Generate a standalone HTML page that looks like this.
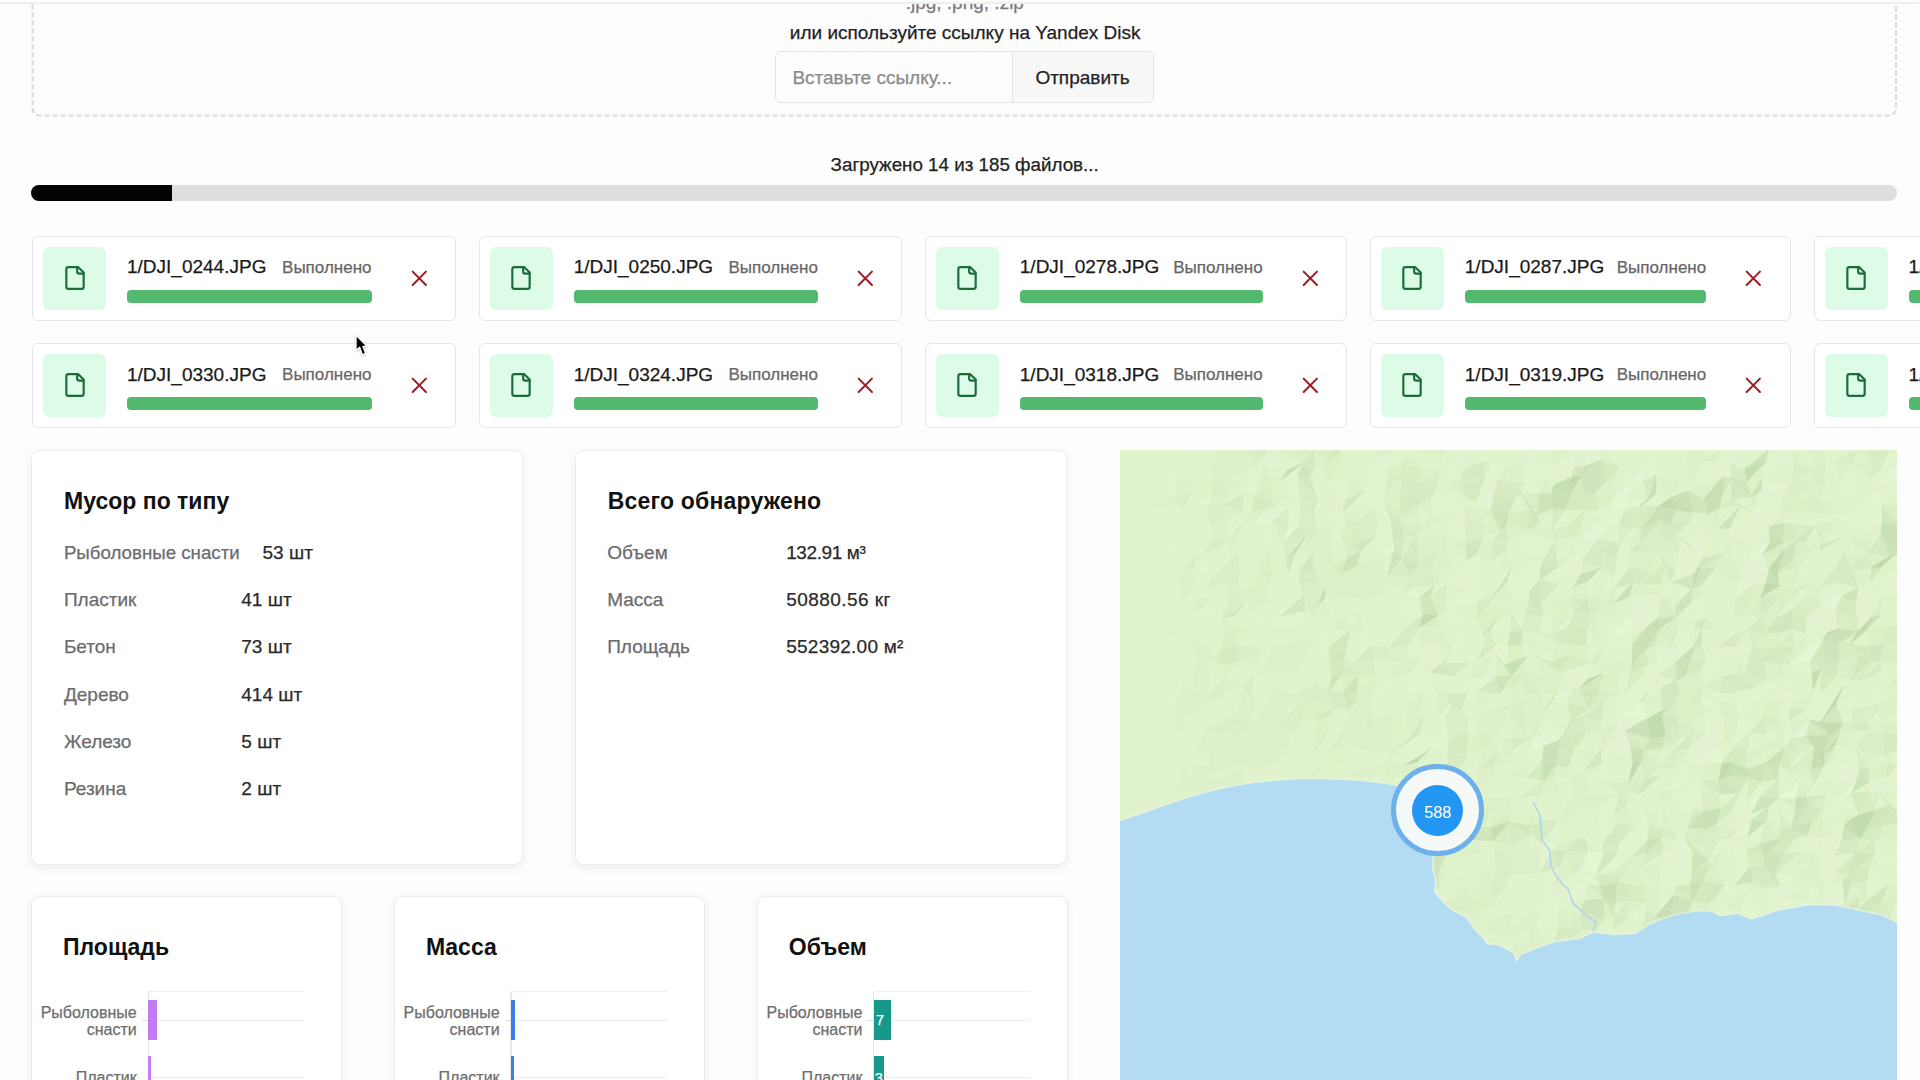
<!DOCTYPE html>
<html><head><meta charset="utf-8"><title>Upload</title>
<style>
html,body{margin:0;padding:0;width:1920px;height:1080px;overflow:hidden;background:#fdfdfd;font-family:"Liberation Sans", sans-serif}
.t{position:absolute;white-space:nowrap;line-height:normal;-webkit-text-stroke:0.25px currentColor}
</style></head><body>
<div style="position:absolute;left:0;top:0;width:1920px;height:2.5px;background:#fdfdfd;z-index:5"></div><div style="position:absolute;left:0;top:2.2px;width:1919px;height:2px;background:#eeeeef;z-index:5"></div>
<svg style="position:absolute;left:0;top:0" width="1920" height="130">
<path d="M32.6 4 V107.5 Q32.6 115.5 40.6 115.5 H1888 Q1896 115.5 1896 107.5 V4" fill="none" stroke="#dcdce1" stroke-width="2.2" stroke-dasharray="5.5 2.5"/>
</svg>
<div class="t" style="left:464.8px;width:1000px;text-align:center;top:-8.2px;font-size:19px;color:#7a7a7a;font-weight:400;letter-spacing:0px">.jpg, .png, .zip</div>
<div class="t" style="left:789.8px;top:21.7px;font-size:19px;color:#222;font-weight:400;letter-spacing:0px;">или используйте ссылку на Yandex Disk</div>
<div style="position:absolute;left:775px;top:51.3px;width:376.5px;height:50px;border:1.2px solid #e4e4e6;border-radius:6px;background:#fdfdfd;overflow:hidden"><div style="position:absolute;left:235.8px;top:0;width:143px;height:50px;background:#f8f8f9;border-left:1.2px solid #e4e4e6"></div></div>
<div class="t" style="left:792.4px;top:67.4px;font-size:19px;color:#8a8a8a;font-weight:400;letter-spacing:0px;">Вставьте ссылку...</div>
<div class="t" style="left:1035.4px;top:67.4px;font-size:19px;color:#222;font-weight:400;letter-spacing:0px;">Отправить</div>
<div class="t" style="left:830.6px;top:154.0px;font-size:18.8px;color:#222;font-weight:400;letter-spacing:0px;">Загружено 14 из 185 файлов...</div>
<div style="position:absolute;left:31px;top:185px;width:1866px;height:16px;border-radius:8px;background:#dedede;overflow:hidden"><div style="width:141px;height:16px;background:#030303"></div></div>
<div style="position:absolute;left:31.9px;top:235.6px;width:424.2px;height:85px;box-sizing:border-box;border:1.3px solid #e6e6e8;border-radius:6px;background:#fff"></div>
<div style="position:absolute;left:43.0px;top:246.7px;width:63px;height:63px;border-radius:6px;background:#dcfce7"></div>
<svg style="position:absolute;left:61.5px;top:265.0px" width="26" height="26" viewBox="0 0 24 24" fill="none" stroke="#1d6b3a" stroke-width="2" stroke-linecap="round" stroke-linejoin="round"><path d="M15 2H6a2 2 0 0 0-2 2v16a2 2 0 0 0 2 2h12a2 2 0 0 0 2-2V7Z"/><path d="M14 2v4a2 2 0 0 0 2 2h4"/></svg>
<div class="t" style="left:127.0px;top:256.4px;font-size:19px;color:#1a1a1a;font-weight:400;letter-spacing:0px;">1/DJI_0244.JPG</div>
<div class="t" style="left:71.5px;width:300px;text-align:right;top:257.5px;font-size:17px;color:#666;font-weight:400;letter-spacing:0px">Выполнено</div>
<div style="position:absolute;left:127.0px;top:289.9px;width:244.5px;height:13px;border-radius:4px;background:#52b96f"></div>
<svg style="position:absolute;left:405.6px;top:264.5px" width="26.6" height="26.6" viewBox="0 0 24 24" fill="none" stroke="#9b1c22" stroke-width="1.8" stroke-linecap="round"><path d="M18 6 6 18"/><path d="m6 6 12 12"/></svg>
<div style="position:absolute;left:478.6px;top:235.6px;width:423.9px;height:85px;box-sizing:border-box;border:1.3px solid #e6e6e8;border-radius:6px;background:#fff"></div>
<div style="position:absolute;left:489.7px;top:246.7px;width:63px;height:63px;border-radius:6px;background:#dcfce7"></div>
<svg style="position:absolute;left:508.2px;top:265.0px" width="26" height="26" viewBox="0 0 24 24" fill="none" stroke="#1d6b3a" stroke-width="2" stroke-linecap="round" stroke-linejoin="round"><path d="M15 2H6a2 2 0 0 0-2 2v16a2 2 0 0 0 2 2h12a2 2 0 0 0 2-2V7Z"/><path d="M14 2v4a2 2 0 0 0 2 2h4"/></svg>
<div class="t" style="left:573.7px;top:256.4px;font-size:19px;color:#1a1a1a;font-weight:400;letter-spacing:0px;">1/DJI_0250.JPG</div>
<div class="t" style="left:517.9px;width:300px;text-align:right;top:257.5px;font-size:17px;color:#666;font-weight:400;letter-spacing:0px">Выполнено</div>
<div style="position:absolute;left:573.7px;top:289.9px;width:244.2px;height:13px;border-radius:4px;background:#52b96f"></div>
<svg style="position:absolute;left:852.0px;top:264.5px" width="26.6" height="26.6" viewBox="0 0 24 24" fill="none" stroke="#9b1c22" stroke-width="1.8" stroke-linecap="round"><path d="M18 6 6 18"/><path d="m6 6 12 12"/></svg>
<div style="position:absolute;left:924.7px;top:235.6px;width:422.5px;height:85px;box-sizing:border-box;border:1.3px solid #e6e6e8;border-radius:6px;background:#fff"></div>
<div style="position:absolute;left:935.8px;top:246.7px;width:63px;height:63px;border-radius:6px;background:#dcfce7"></div>
<svg style="position:absolute;left:954.3px;top:265.0px" width="26" height="26" viewBox="0 0 24 24" fill="none" stroke="#1d6b3a" stroke-width="2" stroke-linecap="round" stroke-linejoin="round"><path d="M15 2H6a2 2 0 0 0-2 2v16a2 2 0 0 0 2 2h12a2 2 0 0 0 2-2V7Z"/><path d="M14 2v4a2 2 0 0 0 2 2h4"/></svg>
<div class="t" style="left:1019.8px;top:256.4px;font-size:19px;color:#1a1a1a;font-weight:400;letter-spacing:0px;">1/DJI_0278.JPG</div>
<div class="t" style="left:962.6px;width:300px;text-align:right;top:257.5px;font-size:17px;color:#666;font-weight:400;letter-spacing:0px">Выполнено</div>
<div style="position:absolute;left:1019.8px;top:289.9px;width:242.8px;height:13px;border-radius:4px;background:#52b96f"></div>
<svg style="position:absolute;left:1296.7px;top:264.5px" width="26.6" height="26.6" viewBox="0 0 24 24" fill="none" stroke="#9b1c22" stroke-width="1.8" stroke-linecap="round"><path d="M18 6 6 18"/><path d="m6 6 12 12"/></svg>
<div style="position:absolute;left:1369.7px;top:235.6px;width:421.1px;height:85px;box-sizing:border-box;border:1.3px solid #e6e6e8;border-radius:6px;background:#fff"></div>
<div style="position:absolute;left:1380.8px;top:246.7px;width:63px;height:63px;border-radius:6px;background:#dcfce7"></div>
<svg style="position:absolute;left:1399.3px;top:265.0px" width="26" height="26" viewBox="0 0 24 24" fill="none" stroke="#1d6b3a" stroke-width="2" stroke-linecap="round" stroke-linejoin="round"><path d="M15 2H6a2 2 0 0 0-2 2v16a2 2 0 0 0 2 2h12a2 2 0 0 0 2-2V7Z"/><path d="M14 2v4a2 2 0 0 0 2 2h4"/></svg>
<div class="t" style="left:1464.8px;top:256.4px;font-size:19px;color:#1a1a1a;font-weight:400;letter-spacing:0px;">1/DJI_0287.JPG</div>
<div class="t" style="left:1406.2px;width:300px;text-align:right;top:257.5px;font-size:17px;color:#666;font-weight:400;letter-spacing:0px">Выполнено</div>
<div style="position:absolute;left:1464.8px;top:289.9px;width:241.4px;height:13px;border-radius:4px;background:#52b96f"></div>
<svg style="position:absolute;left:1740.3px;top:264.5px" width="26.6" height="26.6" viewBox="0 0 24 24" fill="none" stroke="#9b1c22" stroke-width="1.8" stroke-linecap="round"><path d="M18 6 6 18"/><path d="m6 6 12 12"/></svg>
<div style="position:absolute;left:1813.5px;top:235.6px;width:421.0px;height:85px;box-sizing:border-box;border:1.3px solid #e6e6e8;border-radius:6px;background:#fff"></div>
<div style="position:absolute;left:1824.6px;top:246.7px;width:63px;height:63px;border-radius:6px;background:#dcfce7"></div>
<svg style="position:absolute;left:1843.1px;top:265.0px" width="26" height="26" viewBox="0 0 24 24" fill="none" stroke="#1d6b3a" stroke-width="2" stroke-linecap="round" stroke-linejoin="round"><path d="M15 2H6a2 2 0 0 0-2 2v16a2 2 0 0 0 2 2h12a2 2 0 0 0 2-2V7Z"/><path d="M14 2v4a2 2 0 0 0 2 2h4"/></svg>
<div class="t" style="left:1908.6px;top:256.4px;font-size:19px;color:#1a1a1a;font-weight:400;letter-spacing:0px;">1/DJI_0301.JPG</div>
<div class="t" style="left:1849.9px;width:300px;text-align:right;top:257.5px;font-size:17px;color:#666;font-weight:400;letter-spacing:0px">Выполнено</div>
<div style="position:absolute;left:1908.6px;top:289.9px;width:241.3px;height:13px;border-radius:4px;background:#52b96f"></div>
<svg style="position:absolute;left:2184.0px;top:264.5px" width="26.6" height="26.6" viewBox="0 0 24 24" fill="none" stroke="#9b1c22" stroke-width="1.8" stroke-linecap="round"><path d="M18 6 6 18"/><path d="m6 6 12 12"/></svg>
<div style="position:absolute;left:31.9px;top:342.8px;width:424.2px;height:85px;box-sizing:border-box;border:1.3px solid #e6e6e8;border-radius:6px;background:#fff"></div>
<div style="position:absolute;left:43.0px;top:353.9px;width:63px;height:63px;border-radius:6px;background:#dcfce7"></div>
<svg style="position:absolute;left:61.5px;top:372.2px" width="26" height="26" viewBox="0 0 24 24" fill="none" stroke="#1d6b3a" stroke-width="2" stroke-linecap="round" stroke-linejoin="round"><path d="M15 2H6a2 2 0 0 0-2 2v16a2 2 0 0 0 2 2h12a2 2 0 0 0 2-2V7Z"/><path d="M14 2v4a2 2 0 0 0 2 2h4"/></svg>
<div class="t" style="left:127.0px;top:363.6px;font-size:19px;color:#1a1a1a;font-weight:400;letter-spacing:0px;">1/DJI_0330.JPG</div>
<div class="t" style="left:71.5px;width:300px;text-align:right;top:364.7px;font-size:17px;color:#666;font-weight:400;letter-spacing:0px">Выполнено</div>
<div style="position:absolute;left:127.0px;top:397.1px;width:244.5px;height:13px;border-radius:4px;background:#52b96f"></div>
<svg style="position:absolute;left:405.6px;top:371.7px" width="26.6" height="26.6" viewBox="0 0 24 24" fill="none" stroke="#9b1c22" stroke-width="1.8" stroke-linecap="round"><path d="M18 6 6 18"/><path d="m6 6 12 12"/></svg>
<div style="position:absolute;left:478.6px;top:342.8px;width:423.9px;height:85px;box-sizing:border-box;border:1.3px solid #e6e6e8;border-radius:6px;background:#fff"></div>
<div style="position:absolute;left:489.7px;top:353.9px;width:63px;height:63px;border-radius:6px;background:#dcfce7"></div>
<svg style="position:absolute;left:508.2px;top:372.2px" width="26" height="26" viewBox="0 0 24 24" fill="none" stroke="#1d6b3a" stroke-width="2" stroke-linecap="round" stroke-linejoin="round"><path d="M15 2H6a2 2 0 0 0-2 2v16a2 2 0 0 0 2 2h12a2 2 0 0 0 2-2V7Z"/><path d="M14 2v4a2 2 0 0 0 2 2h4"/></svg>
<div class="t" style="left:573.7px;top:363.6px;font-size:19px;color:#1a1a1a;font-weight:400;letter-spacing:0px;">1/DJI_0324.JPG</div>
<div class="t" style="left:517.9px;width:300px;text-align:right;top:364.7px;font-size:17px;color:#666;font-weight:400;letter-spacing:0px">Выполнено</div>
<div style="position:absolute;left:573.7px;top:397.1px;width:244.2px;height:13px;border-radius:4px;background:#52b96f"></div>
<svg style="position:absolute;left:852.0px;top:371.7px" width="26.6" height="26.6" viewBox="0 0 24 24" fill="none" stroke="#9b1c22" stroke-width="1.8" stroke-linecap="round"><path d="M18 6 6 18"/><path d="m6 6 12 12"/></svg>
<div style="position:absolute;left:924.7px;top:342.8px;width:422.5px;height:85px;box-sizing:border-box;border:1.3px solid #e6e6e8;border-radius:6px;background:#fff"></div>
<div style="position:absolute;left:935.8px;top:353.9px;width:63px;height:63px;border-radius:6px;background:#dcfce7"></div>
<svg style="position:absolute;left:954.3px;top:372.2px" width="26" height="26" viewBox="0 0 24 24" fill="none" stroke="#1d6b3a" stroke-width="2" stroke-linecap="round" stroke-linejoin="round"><path d="M15 2H6a2 2 0 0 0-2 2v16a2 2 0 0 0 2 2h12a2 2 0 0 0 2-2V7Z"/><path d="M14 2v4a2 2 0 0 0 2 2h4"/></svg>
<div class="t" style="left:1019.8px;top:363.6px;font-size:19px;color:#1a1a1a;font-weight:400;letter-spacing:0px;">1/DJI_0318.JPG</div>
<div class="t" style="left:962.6px;width:300px;text-align:right;top:364.7px;font-size:17px;color:#666;font-weight:400;letter-spacing:0px">Выполнено</div>
<div style="position:absolute;left:1019.8px;top:397.1px;width:242.8px;height:13px;border-radius:4px;background:#52b96f"></div>
<svg style="position:absolute;left:1296.7px;top:371.7px" width="26.6" height="26.6" viewBox="0 0 24 24" fill="none" stroke="#9b1c22" stroke-width="1.8" stroke-linecap="round"><path d="M18 6 6 18"/><path d="m6 6 12 12"/></svg>
<div style="position:absolute;left:1369.7px;top:342.8px;width:421.1px;height:85px;box-sizing:border-box;border:1.3px solid #e6e6e8;border-radius:6px;background:#fff"></div>
<div style="position:absolute;left:1380.8px;top:353.9px;width:63px;height:63px;border-radius:6px;background:#dcfce7"></div>
<svg style="position:absolute;left:1399.3px;top:372.2px" width="26" height="26" viewBox="0 0 24 24" fill="none" stroke="#1d6b3a" stroke-width="2" stroke-linecap="round" stroke-linejoin="round"><path d="M15 2H6a2 2 0 0 0-2 2v16a2 2 0 0 0 2 2h12a2 2 0 0 0 2-2V7Z"/><path d="M14 2v4a2 2 0 0 0 2 2h4"/></svg>
<div class="t" style="left:1464.8px;top:363.6px;font-size:19px;color:#1a1a1a;font-weight:400;letter-spacing:0px;">1/DJI_0319.JPG</div>
<div class="t" style="left:1406.2px;width:300px;text-align:right;top:364.7px;font-size:17px;color:#666;font-weight:400;letter-spacing:0px">Выполнено</div>
<div style="position:absolute;left:1464.8px;top:397.1px;width:241.4px;height:13px;border-radius:4px;background:#52b96f"></div>
<svg style="position:absolute;left:1740.3px;top:371.7px" width="26.6" height="26.6" viewBox="0 0 24 24" fill="none" stroke="#9b1c22" stroke-width="1.8" stroke-linecap="round"><path d="M18 6 6 18"/><path d="m6 6 12 12"/></svg>
<div style="position:absolute;left:1813.5px;top:342.8px;width:421.0px;height:85px;box-sizing:border-box;border:1.3px solid #e6e6e8;border-radius:6px;background:#fff"></div>
<div style="position:absolute;left:1824.6px;top:353.9px;width:63px;height:63px;border-radius:6px;background:#dcfce7"></div>
<svg style="position:absolute;left:1843.1px;top:372.2px" width="26" height="26" viewBox="0 0 24 24" fill="none" stroke="#1d6b3a" stroke-width="2" stroke-linecap="round" stroke-linejoin="round"><path d="M15 2H6a2 2 0 0 0-2 2v16a2 2 0 0 0 2 2h12a2 2 0 0 0 2-2V7Z"/><path d="M14 2v4a2 2 0 0 0 2 2h4"/></svg>
<div class="t" style="left:1908.6px;top:363.6px;font-size:19px;color:#1a1a1a;font-weight:400;letter-spacing:0px;">1/DJI_0312.JPG</div>
<div class="t" style="left:1849.9px;width:300px;text-align:right;top:364.7px;font-size:17px;color:#666;font-weight:400;letter-spacing:0px">Выполнено</div>
<div style="position:absolute;left:1908.6px;top:397.1px;width:241.3px;height:13px;border-radius:4px;background:#52b96f"></div>
<svg style="position:absolute;left:2184.0px;top:371.7px" width="26.6" height="26.6" viewBox="0 0 24 24" fill="none" stroke="#9b1c22" stroke-width="1.8" stroke-linecap="round"><path d="M18 6 6 18"/><path d="m6 6 12 12"/></svg>
<svg style="position:absolute;left:0;top:0;z-index:10" width="400" height="380"><filter id="cs" x="-50%" y="-50%" width="200%" height="200%"><feDropShadow dx="0" dy="1" stdDeviation="1" flood-opacity="0.25"/></filter><path filter="url(#cs)" d="M356.1,335.4 L356.1,350.2 L359.7,347.1 L362.4,354.6 L365.5,353.4 L362.8,346.4 L367,346.4 Z" fill="#000" stroke="#fff" stroke-width="1.1" stroke-linejoin="round"/></svg>
<div style="position:absolute;left:30.7px;top:449.5px;width:492.6px;height:415.5px;box-sizing:border-box;border:1px solid #ececee;border-radius:8px;background:#fff;box-shadow:0 3px 10px rgba(0,0,0,0.06)"></div>
<div style="position:absolute;left:575px;top:449.5px;width:492.3px;height:415.5px;box-sizing:border-box;border:1px solid #ececee;border-radius:8px;background:#fff;box-shadow:0 3px 10px rgba(0,0,0,0.06)"></div>
<div class="t" style="left:64.1px;top:488.0px;font-size:23px;color:#111;font-weight:700;letter-spacing:0px;-webkit-text-stroke:0;">Мусор по типу</div>
<div class="t" style="left:607.7px;top:488.0px;font-size:23px;color:#111;font-weight:700;letter-spacing:0.2px;-webkit-text-stroke:0;">Всего обнаружено</div>
<div class="t" style="left:63.9px;top:542.1px;font-size:18.7px;color:#6b6b70;font-weight:400;letter-spacing:0px;">Рыболовные снасти</div>
<div class="t" style="left:262.5px;top:541.8px;font-size:19px;color:#2a2a2a;font-weight:400;letter-spacing:0px;">53 шт</div>
<div class="t" style="left:63.9px;top:589.1px;font-size:19px;color:#6b6b70;font-weight:400;letter-spacing:0px;">Пластик</div>
<div class="t" style="left:241.3px;top:589.1px;font-size:19px;color:#2a2a2a;font-weight:400;letter-spacing:0px;">41 шт</div>
<div class="t" style="left:63.9px;top:636.4px;font-size:19px;color:#6b6b70;font-weight:400;letter-spacing:0px;">Бетон</div>
<div class="t" style="left:241.3px;top:636.4px;font-size:19px;color:#2a2a2a;font-weight:400;letter-spacing:0px;">73 шт</div>
<div class="t" style="left:63.9px;top:683.7px;font-size:19px;color:#6b6b70;font-weight:400;letter-spacing:0px;">Дерево</div>
<div class="t" style="left:241.3px;top:683.7px;font-size:19px;color:#2a2a2a;font-weight:400;letter-spacing:0px;">414 шт</div>
<div class="t" style="left:63.9px;top:731.0px;font-size:19px;color:#6b6b70;font-weight:400;letter-spacing:0px;">Железо</div>
<div class="t" style="left:241.3px;top:731.0px;font-size:19px;color:#2a2a2a;font-weight:400;letter-spacing:0px;">5 шт</div>
<div class="t" style="left:63.9px;top:778.3px;font-size:19px;color:#6b6b70;font-weight:400;letter-spacing:0px;">Резина</div>
<div class="t" style="left:241.3px;top:778.3px;font-size:19px;color:#2a2a2a;font-weight:400;letter-spacing:0px;">2 шт</div>
<div class="t" style="left:607.2px;top:541.8px;font-size:19px;color:#6b6b70;font-weight:400;letter-spacing:0px;">Объем</div>
<div class="t" style="left:786.2px;top:541.8px;font-size:19px;color:#2a2a2a;font-weight:400;letter-spacing:-0.4px;">132.91 м³</div>
<div class="t" style="left:607.2px;top:589.1px;font-size:19px;color:#6b6b70;font-weight:400;letter-spacing:0px;">Масса</div>
<div class="t" style="left:786.2px;top:589.1px;font-size:19px;color:#2a2a2a;font-weight:400;letter-spacing:0.45px;">50880.56 кг</div>
<div class="t" style="left:607.2px;top:636.4px;font-size:19px;color:#6b6b70;font-weight:400;letter-spacing:0px;">Площадь</div>
<div class="t" style="left:786.2px;top:636.4px;font-size:19px;color:#2a2a2a;font-weight:400;letter-spacing:0.25px;">552392.00 м²</div>
<div style="position:absolute;left:30.8px;top:895.9px;width:311.1px;height:250px;box-sizing:border-box;border:1px solid #ececee;border-radius:8px;background:#fff;box-shadow:0 3px 10px rgba(0,0,0,0.06)"></div>
<div class="t" style="left:63.0px;top:934.0px;font-size:23px;color:#111;font-weight:700;letter-spacing:0px;-webkit-text-stroke:0;">Площадь</div>
<div style="position:absolute;left:148.0px;top:991.2px;width:156.2px;height:1.2px;background:#eeeeee"></div>
<div style="position:absolute;left:148.0px;top:1019.8px;width:156.2px;height:1.2px;background:#eeeeee"></div>
<div style="position:absolute;left:148.0px;top:1076.7px;width:156.2px;height:1.2px;background:#eeeeee"></div>
<div style="position:absolute;left:147.5px;top:991.7px;width:1.2px;height:90px;background:#e6e6e6"></div>
<div style="position:absolute;left:142.0px;top:1019.8px;width:6px;height:1.2px;background:#e0e0e0"></div>
<div style="position:absolute;left:148.0px;top:999.5px;width:8.9px;height:40.3px;background:#c27cf6"></div>
<div style="position:absolute;left:148.0px;top:1056.3px;width:2.8px;height:30px;background:#c27cf6"></div>
<div class="t" style="left:-163.3px;width:300px;text-align:right;top:1003.5px;font-size:16px;color:#6e6e6e;font-weight:400;letter-spacing:0px">Рыболовные</div>
<div class="t" style="left:-163.3px;width:300px;text-align:right;top:1020.7px;font-size:16px;color:#6e6e6e;font-weight:400;letter-spacing:0px">снасти</div>
<div class="t" style="left:-163.3px;width:300px;text-align:right;top:1068.5px;font-size:16px;color:#6e6e6e;font-weight:400;letter-spacing:0px">Пластик</div>
<div style="position:absolute;left:393.7px;top:895.9px;width:311.1px;height:250px;box-sizing:border-box;border:1px solid #ececee;border-radius:8px;background:#fff;box-shadow:0 3px 10px rgba(0,0,0,0.06)"></div>
<div class="t" style="left:425.9px;top:934.0px;font-size:23px;color:#111;font-weight:700;letter-spacing:0px;-webkit-text-stroke:0;">Масса</div>
<div style="position:absolute;left:510.9px;top:991.2px;width:156.2px;height:1.2px;background:#eeeeee"></div>
<div style="position:absolute;left:510.9px;top:1019.8px;width:156.2px;height:1.2px;background:#eeeeee"></div>
<div style="position:absolute;left:510.9px;top:1076.7px;width:156.2px;height:1.2px;background:#eeeeee"></div>
<div style="position:absolute;left:510.4px;top:991.7px;width:1.2px;height:90px;background:#e6e6e6"></div>
<div style="position:absolute;left:504.9px;top:1019.8px;width:6px;height:1.2px;background:#e0e0e0"></div>
<div style="position:absolute;left:510.9px;top:999.5px;width:4.4px;height:40.3px;background:#3b7ee8"></div>
<div style="position:absolute;left:510.9px;top:1056.3px;width:2.8px;height:30px;background:#3b7ee8"></div>
<div class="t" style="left:199.6px;width:300px;text-align:right;top:1003.5px;font-size:16px;color:#6e6e6e;font-weight:400;letter-spacing:0px">Рыболовные</div>
<div class="t" style="left:199.6px;width:300px;text-align:right;top:1020.7px;font-size:16px;color:#6e6e6e;font-weight:400;letter-spacing:0px">снасти</div>
<div class="t" style="left:199.6px;width:300px;text-align:right;top:1068.5px;font-size:16px;color:#6e6e6e;font-weight:400;letter-spacing:0px">Пластик</div>
<div style="position:absolute;left:756.6px;top:895.9px;width:311.1px;height:250px;box-sizing:border-box;border:1px solid #ececee;border-radius:8px;background:#fff;box-shadow:0 3px 10px rgba(0,0,0,0.06)"></div>
<div class="t" style="left:788.8px;top:934.0px;font-size:23px;color:#111;font-weight:700;letter-spacing:0px;-webkit-text-stroke:0;">Объем</div>
<div style="position:absolute;left:873.8px;top:991.2px;width:156.2px;height:1.2px;background:#eeeeee"></div>
<div style="position:absolute;left:873.8px;top:1019.8px;width:156.2px;height:1.2px;background:#eeeeee"></div>
<div style="position:absolute;left:873.8px;top:1076.7px;width:156.2px;height:1.2px;background:#eeeeee"></div>
<div style="position:absolute;left:873.3px;top:991.7px;width:1.2px;height:90px;background:#e6e6e6"></div>
<div style="position:absolute;left:867.8px;top:1019.8px;width:6px;height:1.2px;background:#e0e0e0"></div>
<div style="position:absolute;left:873.8px;top:999.5px;width:17.6px;height:40.3px;background:#16998a"></div>
<div style="position:absolute;left:873.8px;top:1056.3px;width:10.6px;height:30px;background:#16998a"></div>
<div class="t" style="left:562.5px;width:300px;text-align:right;top:1003.5px;font-size:16px;color:#6e6e6e;font-weight:400;letter-spacing:0px">Рыболовные</div>
<div class="t" style="left:562.5px;width:300px;text-align:right;top:1020.7px;font-size:16px;color:#6e6e6e;font-weight:400;letter-spacing:0px">снасти</div>
<div class="t" style="left:562.5px;width:300px;text-align:right;top:1068.5px;font-size:16px;color:#6e6e6e;font-weight:400;letter-spacing:0px">Пластик</div>
<div class="t" style="left:876.1px;top:1012.3px;font-size:14.4px;color:#fff;font-weight:400;letter-spacing:0px;">7</div>
<div class="t" style="left:874.8px;top:1070.0px;font-size:14.4px;color:#fff;font-weight:400;letter-spacing:0px;">3</div>
<svg style="position:absolute;left:1119.6px;top:450px" width="777.1" height="630" viewBox="0 0 777.1 630">
<rect width="777.1" height="630" fill="#e1f3cc"/>
<g stroke-width="0.7"><path fill="#e1f3cf" stroke="#e1f3cf" d="M75 0 89 0 79 13ZM149 0 160 0 167 20ZM149 0 167 20 145 17ZM325 0 349 0 344 19ZM423 0 415 14 406 13ZM466 0 465 16 455 17ZM479 0 482 10 465 16ZM537 0 536 16 524 14ZM557 0 550 10 536 16ZM601 0 615 0 611 14ZM601 0 611 14 595 11ZM615 0 625 19 611 14ZM628 0 648 0 625 19ZM662 0 672 0 674 11ZM662 0 674 11 657 13ZM770 0 777 15 760 20ZM124 20 135 17 123 35ZM135 17 139 33 123 35ZM251 12 260 29 245 35ZM251 12 267 27 260 29ZM328 14 344 19 341 32ZM328 14 341 32 332 33ZM372 12 387 15 378 30ZM406 13 415 14 425 29ZM406 13 425 29 403 33ZM415 14 434 16 434 35ZM415 14 434 35 425 29ZM434 16 455 17 452 27ZM514 18 515 32 491 33ZM583 10 584 34 570 35ZM583 10 595 11 603 27ZM595 11 612 28 603 27ZM733 13 735 25 720 30ZM760 20 760 33 749 27ZM760 20 777 15 760 33ZM49 32 57 29 46 48ZM57 29 56 46 46 48ZM123 35 136 45 124 44ZM178 25 180 50 164 45ZM207 32 230 29 226 50ZM260 29 251 44 244 41ZM260 29 267 27 266 42ZM260 29 266 42 251 44ZM403 33 425 29 420 43ZM403 33 420 43 401 44ZM720 30 735 25 735 43ZM720 30 735 43 715 49ZM760 33 777 27 777 45ZM244 41 251 44 254 58ZM244 41 254 58 242 61ZM251 44 266 42 265 56ZM251 44 265 56 254 58ZM311 47 332 41 334 62ZM311 47 334 62 311 64ZM332 41 343 57 334 62ZM505 50 528 50 506 59ZM641 40 662 44 664 61ZM641 40 664 61 640 64ZM763 41 777 45 762 55ZM155 56 168 59 152 72ZM168 59 180 64 168 80ZM223 63 226 71 213 76ZM242 61 254 58 236 72ZM254 58 265 56 271 70ZM465 60 477 60 485 71ZM477 60 490 58 485 71ZM705 64 723 63 718 70ZM705 64 718 70 704 74ZM723 63 736 64 731 79ZM723 63 731 79 718 70ZM736 64 752 62 748 80ZM736 64 748 80 731 79ZM152 72 150 88 139 86ZM213 76 226 71 211 89ZM271 70 274 95 255 87ZM345 71 346 94 327 87ZM514 77 514 85 500 94ZM46 94 65 91 43 105ZM139 86 150 88 149 102ZM255 87 274 95 260 103ZM400 88 425 86 424 109ZM400 88 424 109 400 104ZM454 87 463 87 462 110ZM500 94 514 85 509 103ZM500 94 509 103 497 104ZM556 85 575 102 560 101ZM630 92 650 92 629 109ZM87 102 95 125 72 120ZM347 110 356 104 342 119ZM356 104 361 122 342 119ZM455 103 447 117 437 117ZM497 104 509 103 510 117ZM497 104 510 117 494 125ZM642 104 649 119 635 119ZM332 119 342 119 345 139ZM332 119 345 139 326 133ZM378 124 392 116 378 140ZM409 118 421 119 420 130ZM409 118 420 130 410 140ZM437 117 447 117 439 134ZM447 117 461 124 454 136ZM620 121 635 119 619 131ZM680 116 691 121 689 134ZM702 119 716 117 700 136ZM760 118 777 122 777 131ZM760 118 777 131 765 131ZM76 131 75 145 62 153ZM345 139 347 154 326 155ZM387 131 410 140 391 149ZM410 140 409 151 391 149ZM439 134 431 155 421 154ZM540 134 551 132 556 155ZM765 131 777 146 762 146ZM90 149 95 167 77 164ZM244 148 238 163 228 162ZM282 148 300 148 280 169ZM300 148 303 165 280 169ZM326 155 342 160 327 161ZM509 147 528 145 513 163ZM543 147 537 169 529 163ZM571 152 583 145 572 170ZM583 145 585 169 572 170ZM670 148 671 160 656 169ZM746 155 762 146 752 167ZM134 162 145 168 153 177ZM134 162 153 177 131 176ZM145 168 160 166 163 179ZM145 168 163 179 153 177ZM160 166 185 161 163 179ZM185 161 175 177 163 179ZM185 161 192 166 175 177ZM327 161 342 160 340 177ZM327 161 340 177 333 177ZM377 169 392 163 390 183ZM377 169 390 183 370 180ZM423 165 433 166 432 185ZM423 165 432 185 418 183ZM498 170 513 163 491 183ZM529 163 537 169 526 178ZM686 170 707 183 686 184ZM49 185 60 191 42 193ZM244 181 250 179 251 196ZM244 181 251 196 241 195ZM333 177 340 177 348 197ZM333 177 348 197 332 199ZM491 183 492 197 482 200ZM491 183 512 183 513 194ZM574 175 575 195 551 198ZM686 184 707 183 703 190ZM194 190 209 198 209 207ZM194 190 209 207 199 208ZM241 195 251 196 235 212ZM289 194 301 198 284 211ZM332 199 349 213 325 213ZM348 197 356 213 349 213ZM535 195 551 198 555 213ZM535 195 555 213 537 212ZM320 214 310 222 295 223ZM528 214 537 212 538 224ZM528 214 538 224 523 224ZM597 206 603 226 580 221ZM670 214 690 211 692 222ZM670 214 692 222 674 221ZM265 227 271 239 254 242ZM289 225 295 223 305 243ZM289 225 305 243 284 243ZM295 223 310 222 316 238ZM295 223 316 238 305 243ZM347 228 364 226 358 241ZM347 228 358 241 347 243ZM447 220 453 238 436 244ZM498 228 511 222 498 244ZM511 222 505 243 498 244ZM538 224 556 230 541 238ZM580 221 603 226 583 236ZM646 230 660 237 646 242ZM761 220 777 227 765 241ZM254 242 271 239 252 252ZM305 243 316 238 300 260ZM380 243 376 260 357 256ZM498 244 505 243 512 260ZM498 244 512 260 498 257ZM505 243 528 244 512 260ZM635 237 627 251 615 252ZM635 237 646 242 627 251ZM660 237 662 252 647 250ZM693 240 701 243 687 260ZM701 243 723 237 709 259ZM736 244 731 260 716 254ZM754 240 765 241 764 253ZM754 240 764 253 754 256ZM765 241 777 237 764 253ZM300 260 305 265 287 268ZM300 260 318 268 305 265ZM469 259 484 250 463 267ZM498 257 512 260 498 271ZM581 253 597 251 604 270ZM615 252 627 251 627 273ZM615 252 627 273 619 268ZM670 259 670 270 659 271ZM687 260 709 259 689 270ZM764 253 760 274 749 273ZM318 268 326 265 329 290ZM318 268 329 290 319 285ZM357 269 357 283 348 283ZM431 266 440 290 415 285ZM481 272 498 271 480 280ZM627 273 631 282 615 289ZM670 270 673 287 665 283ZM299 284 305 303 281 297ZM299 284 319 285 311 298ZM299 284 311 298 305 303ZM319 285 329 290 328 302ZM319 285 328 302 311 298ZM602 283 612 298 600 299ZM645 284 665 283 646 296ZM408 302 424 296 409 316ZM424 296 422 312 409 316ZM498 304 511 299 491 311ZM715 295 736 300 740 319ZM715 295 740 319 717 310ZM297 312 316 316 318 326ZM297 312 318 326 299 334ZM409 316 422 312 407 327ZM448 317 465 320 451 327ZM491 311 493 333 480 330ZM556 318 565 310 568 332ZM556 318 568 332 552 334ZM704 316 717 310 715 332ZM704 316 715 332 701 328ZM552 334 553 341 539 342ZM552 334 568 332 553 341ZM568 332 581 331 582 342ZM568 332 582 342 572 347ZM767 327 760 343 749 342ZM767 327 777 342 760 343ZM199 348 208 340 197 357ZM302 344 303 363 282 363ZM350 344 365 347 359 363ZM350 344 359 363 344 361ZM553 341 572 347 573 359ZM553 341 573 359 559 364ZM658 348 676 358 658 359ZM706 345 723 348 725 364ZM706 345 725 364 703 360ZM723 348 739 365 725 364ZM760 343 768 355 755 361ZM435 360 446 358 438 370ZM482 356 494 365 497 374ZM482 356 497 374 477 373ZM524 357 529 376 514 376ZM632 363 649 356 632 370ZM703 360 725 364 724 376ZM438 370 439 393 421 393ZM477 373 497 374 483 394ZM514 376 508 393 500 392ZM514 376 529 376 508 393ZM529 376 528 390 508 393ZM646 371 640 394 628 386ZM702 374 724 376 722 391ZM298 385 310 404 302 403ZM421 393 433 401 421 407ZM464 388 483 394 483 404ZM500 392 508 393 511 407ZM500 392 511 407 495 406ZM508 393 528 390 511 407ZM600 389 600 403 588 410ZM600 389 612 387 600 403ZM687 385 693 401 680 402ZM302 403 304 418 281 424ZM557 408 553 424 542 416ZM573 403 572 424 553 424ZM615 410 626 400 617 415ZM715 405 736 402 717 422ZM761 402 777 407 763 420ZM419 423 439 417 421 440ZM542 416 553 424 555 437ZM553 424 572 424 570 435ZM553 424 570 435 555 437ZM655 425 673 424 678 439ZM750 416 768 435 746 433ZM777 424 777 435 768 435ZM421 440 432 436 439 453ZM421 440 439 453 420 450ZM604 435 615 435 611 453ZM642 438 660 436 655 452ZM642 438 655 452 648 451ZM694 430 704 451 685 452ZM704 438 723 431 725 453ZM420 450 439 453 418 462ZM445 451 461 461 454 462ZM495 454 509 450 494 467ZM525 453 527 461 507 469ZM596 447 619 463 601 461ZM626 446 648 470 634 461ZM648 451 655 452 659 460ZM648 451 659 460 648 470ZM677 450 674 466 659 460ZM677 450 685 452 687 465ZM677 450 687 465 674 466ZM704 451 725 453 722 464ZM704 451 722 464 701 465ZM418 462 439 461 439 476ZM418 462 439 476 416 476ZM507 469 527 461 507 479ZM659 460 674 466 660 478ZM722 464 722 475 706 483ZM439 476 432 499 425 498ZM507 479 522 476 509 498ZM612 483 626 478 610 495ZM425 498 432 499 433 506ZM425 498 433 506 423 505ZM423 505 433 506 435 525ZM423 505 435 525 417 529ZM560 512 573 512 558 529ZM573 512 584 515 566 527ZM770 507 777 508 767 521ZM299 528 305 538 290 543ZM332 530 346 527 330 536ZM417 529 435 525 420 539ZM452 529 461 523 447 538ZM691 528 703 522 690 545ZM402 542 406 550 386 559ZM581 541 605 538 581 550ZM605 538 603 551 581 550ZM731 536 751 540 746 550ZM731 536 746 550 736 558ZM505 550 522 560 505 567ZM522 560 537 557 529 574ZM560 556 558 574 538 573ZM560 556 574 553 558 574ZM627 558 641 555 645 572ZM641 555 656 558 645 572ZM656 558 679 559 674 574ZM656 558 674 574 660 575ZM706 558 720 556 701 567ZM720 556 718 574 701 567ZM720 556 736 558 730 567ZM720 556 730 567 718 574ZM736 558 746 550 752 575ZM736 558 752 575 730 567ZM287 573 303 582 288 580ZM469 575 460 589 447 580ZM483 568 476 590 460 589ZM483 568 492 569 494 587ZM492 569 505 567 494 587ZM505 567 506 588 494 587ZM505 567 529 574 522 584ZM538 573 558 574 540 581ZM558 574 552 588 540 581ZM660 575 674 574 672 580ZM660 575 672 580 662 589ZM701 567 718 574 705 587ZM288 580 303 582 288 600ZM425 584 437 586 417 595ZM649 580 640 599 628 602ZM747 584 746 596 731 605ZM417 595 434 596 440 618ZM417 595 440 618 422 612ZM447 603 470 612 447 614ZM525 605 536 612 527 618ZM613 599 620 616 596 616ZM613 599 628 602 628 617ZM613 599 628 617 620 616ZM640 599 644 612 628 617ZM640 599 656 603 644 612ZM731 605 746 596 737 620ZM512 614 527 618 507 629ZM536 612 535 630 525 630ZM596 616 620 616 597 628ZM644 612 648 630 626 627ZM777 618 777 626 765 627ZM178 630 193 629 182 630ZM300 627 320 630 320 630ZM300 627 320 630 304 630ZM432 626 452 630 446 630ZM432 626 446 630 439 630ZM678 628 686 630 671 630ZM755 630 765 627 762 630Z"/><path fill="#def0c9" stroke="#def0c9" d="M100 0 106 15 92 16ZM100 0 120 0 124 20ZM100 0 124 20 106 15ZM120 0 130 0 135 17ZM120 0 135 17 124 20ZM160 0 176 0 183 13ZM194 0 205 15 194 17ZM256 0 275 0 251 12ZM286 0 301 19 281 14ZM320 0 325 0 318 19ZM432 0 451 0 434 16ZM479 0 499 18 482 10ZM569 0 583 0 583 10ZM569 0 583 10 567 11ZM672 0 694 20 674 11ZM691 0 705 0 705 15ZM691 0 705 15 694 20ZM737 0 748 0 753 11ZM92 16 106 15 103 27ZM92 16 103 27 90 33ZM106 15 124 20 103 27ZM167 20 162 30 153 33ZM301 19 318 19 301 34ZM387 15 406 13 403 33ZM387 15 403 33 387 33ZM567 11 583 10 570 35ZM646 11 642 29 627 31ZM694 20 691 34 673 30ZM716 11 733 13 720 30ZM733 13 753 11 749 27ZM57 29 72 33 72 43ZM57 29 72 43 56 46ZM103 27 123 35 106 48ZM139 33 153 33 136 45ZM230 29 244 41 226 50ZM282 27 281 47 266 42ZM332 33 349 50 332 41ZM484 33 491 33 475 43ZM491 33 496 45 475 43ZM536 25 560 32 550 48ZM570 35 584 34 584 49ZM570 35 584 49 568 41ZM584 34 603 27 584 49ZM612 28 611 49 603 42ZM627 31 642 29 631 47ZM673 30 671 50 662 44ZM691 34 691 48 671 50ZM691 34 704 34 701 49ZM691 34 701 49 691 48ZM46 48 43 58 25 57ZM46 48 56 46 63 58ZM93 45 106 48 88 55ZM106 48 102 55 88 55ZM150 47 164 45 155 56ZM266 42 281 47 280 63ZM303 49 311 64 297 56ZM603 42 611 49 599 58ZM662 44 671 50 677 63ZM701 49 723 63 705 64ZM223 63 242 61 236 72ZM223 63 236 72 226 71ZM297 56 302 77 280 73ZM311 64 317 73 302 77ZM343 57 358 60 364 72ZM343 57 364 72 345 71ZM417 65 433 58 419 73ZM573 62 587 64 581 73ZM587 64 599 58 598 79ZM664 61 664 73 649 77ZM78 78 77 85 65 91ZM90 75 107 70 108 92ZM90 75 108 92 92 89ZM195 77 213 76 211 89ZM195 77 211 89 197 88ZM302 77 317 73 297 86ZM364 72 380 80 363 89ZM385 75 408 80 389 88ZM408 80 419 73 425 86ZM419 73 432 80 435 91ZM419 73 435 91 425 86ZM461 75 463 87 454 87ZM522 79 520 92 514 85ZM704 74 718 70 702 94ZM92 89 87 102 79 105ZM108 92 118 85 110 107ZM185 87 193 104 177 100ZM197 88 211 89 212 102ZM197 88 212 102 193 104ZM284 86 297 86 282 108ZM297 86 313 86 315 102ZM297 86 315 102 298 110ZM313 86 327 87 327 104ZM313 86 327 104 315 102ZM327 87 346 94 347 110ZM363 89 374 90 372 110ZM363 89 372 110 356 104ZM514 85 520 92 509 103ZM611 86 610 105 603 104ZM662 93 675 91 664 100ZM685 93 702 94 700 100ZM731 87 748 103 738 109ZM193 104 212 102 213 116ZM193 104 213 116 193 119ZM260 103 250 121 237 115ZM260 103 268 125 250 121ZM315 102 327 104 311 120ZM327 104 332 119 311 120ZM386 100 392 116 378 124ZM462 110 481 118 461 124ZM509 103 522 100 528 122ZM509 103 528 122 510 117ZM522 100 538 103 528 122ZM538 103 560 101 555 123ZM603 104 610 105 620 121ZM603 104 620 121 596 117ZM724 102 738 109 732 121ZM748 103 770 106 752 117ZM72 120 76 131 59 136ZM193 119 213 116 205 139ZM213 116 224 138 205 139ZM222 123 237 115 224 138ZM237 115 239 139 224 138ZM237 115 250 121 239 139ZM250 121 255 131 239 139ZM250 121 268 125 255 131ZM268 125 265 136 255 131ZM268 125 289 125 286 139ZM268 125 286 139 265 136ZM311 120 326 133 314 135ZM545 116 551 132 540 134ZM596 117 620 121 619 131ZM596 117 619 131 603 130ZM657 123 680 116 674 137ZM657 123 674 137 659 136ZM732 121 750 132 738 138ZM59 136 76 131 62 153ZM118 140 133 136 124 155ZM133 136 137 153 124 155ZM133 136 149 134 147 155ZM133 136 147 155 137 153ZM205 139 224 138 228 146ZM205 139 228 146 205 148ZM224 138 239 139 228 146ZM239 139 244 148 228 146ZM239 139 255 131 258 146ZM239 139 258 146 244 148ZM255 131 265 136 258 146ZM286 139 296 136 282 148ZM387 131 391 149 371 150ZM454 136 468 131 468 148ZM454 136 468 148 451 149ZM483 132 485 151 468 148ZM513 132 522 134 528 145ZM513 132 528 145 509 147ZM522 134 543 147 528 145ZM572 139 580 136 583 145ZM631 136 646 133 641 147ZM631 136 641 147 630 154ZM689 134 700 136 702 151ZM689 134 702 151 686 149ZM75 145 90 149 77 164ZM137 153 134 162 115 165ZM198 155 205 148 210 166ZM198 155 210 166 192 166ZM371 150 392 163 377 169ZM485 151 494 153 498 170ZM485 151 498 170 477 162ZM543 147 556 155 556 167ZM662 145 656 169 642 166ZM102 169 121 178 106 183ZM228 162 230 180 209 178ZM238 163 244 181 230 180ZM433 166 455 162 432 185ZM477 162 476 181 467 180ZM556 167 559 176 539 179ZM556 167 572 170 574 175ZM572 170 585 169 574 175ZM193 182 209 178 194 190ZM300 177 319 176 314 192ZM300 177 314 192 301 198ZM319 176 332 199 314 192ZM363 185 370 180 364 197ZM402 180 423 197 401 194ZM467 180 476 181 482 200ZM539 179 551 198 535 195ZM574 175 582 178 575 195ZM645 183 644 200 633 195ZM645 183 663 182 657 197ZM645 183 657 197 644 200ZM686 184 686 200 674 198ZM738 181 730 194 718 194ZM746 180 763 193 749 197ZM73 192 95 197 90 211ZM73 192 90 211 78 211ZM140 198 138 213 118 211ZM152 194 162 196 166 206ZM152 194 166 206 150 208ZM162 196 176 192 166 206ZM176 192 184 208 166 206ZM176 192 194 190 184 208ZM269 198 289 194 284 211ZM436 192 449 195 448 206ZM436 192 448 206 432 213ZM449 195 466 194 448 206ZM466 194 469 213 448 206ZM525 200 535 195 537 212ZM525 200 537 212 528 214ZM674 198 686 200 670 214ZM78 211 90 211 89 225ZM78 211 89 225 73 229ZM102 215 118 211 105 228ZM150 208 153 223 134 226ZM150 208 166 206 168 224ZM150 208 168 224 153 223ZM166 206 184 208 180 223ZM166 206 180 223 168 224ZM284 211 289 225 265 227ZM284 211 302 209 289 225ZM356 213 364 226 347 228ZM356 213 376 205 364 226ZM407 207 407 222 392 226ZM416 206 438 221 422 225ZM477 214 496 213 498 228ZM496 213 512 214 498 228ZM615 205 625 224 619 224ZM645 210 660 214 665 225ZM645 210 665 225 646 230ZM751 211 760 211 746 229ZM62 226 73 229 62 236ZM73 229 89 225 76 242ZM89 225 90 245 76 242ZM105 228 122 235 102 245ZM392 226 391 238 380 243ZM407 222 404 244 391 238ZM407 222 422 225 419 242ZM422 225 436 244 419 242ZM438 221 447 220 436 244ZM498 228 498 244 479 241ZM565 226 580 221 583 236ZM777 227 777 237 765 241ZM62 236 76 242 80 254ZM62 236 80 254 56 250ZM76 242 90 245 86 256ZM76 242 86 256 80 254ZM90 245 102 245 86 256ZM122 235 135 250 121 253ZM153 236 163 242 169 255ZM153 236 169 255 145 260ZM163 242 176 244 169 255ZM176 244 181 252 169 255ZM176 244 198 254 181 252ZM236 243 254 242 252 252ZM236 243 252 252 237 250ZM305 243 300 260 286 259ZM358 241 380 243 357 256ZM391 238 404 244 404 251ZM391 238 404 251 392 254ZM404 244 419 242 425 260ZM404 244 425 260 404 251ZM541 238 543 260 520 251ZM559 243 572 244 571 258ZM693 240 687 260 670 259ZM777 237 777 258 764 253ZM56 250 80 254 56 274ZM135 250 133 274 117 270ZM145 260 146 275 133 274ZM145 260 169 255 160 274ZM145 260 160 274 146 275ZM228 260 237 250 245 274ZM228 260 245 274 224 275ZM237 250 252 252 251 268ZM237 250 251 268 245 274ZM286 259 300 260 287 268ZM376 260 379 267 357 269ZM404 251 425 260 402 273ZM425 260 422 267 402 273ZM571 258 581 253 585 265ZM571 258 585 265 574 274ZM597 251 615 252 619 268ZM597 251 619 268 604 270ZM647 250 662 252 659 271ZM754 256 749 273 733 272ZM764 253 777 258 760 274ZM56 274 73 269 57 281ZM117 270 115 286 107 282ZM133 274 136 285 115 286ZM133 274 146 275 136 285ZM146 275 152 281 136 285ZM146 275 160 274 152 281ZM160 274 169 287 152 281ZM182 267 195 268 175 281ZM195 268 207 267 195 285ZM224 275 245 274 241 289ZM224 275 241 289 224 281ZM245 274 251 286 241 289ZM251 268 274 265 251 286ZM274 265 273 281 251 286ZM287 268 305 265 288 290ZM357 269 379 267 374 290ZM357 269 374 290 357 283ZM379 267 391 266 374 290ZM391 266 408 289 393 289ZM402 273 422 267 408 289ZM498 271 494 285 480 280ZM558 268 574 274 574 280ZM604 270 619 268 615 289ZM604 270 615 289 602 283ZM659 271 665 283 645 284ZM670 270 689 270 673 287ZM723 274 735 281 718 285ZM749 273 763 284 746 281ZM85 281 91 300 75 301ZM85 281 107 282 91 300ZM107 282 103 297 91 300ZM107 282 115 286 117 300ZM107 282 117 300 103 297ZM115 286 136 285 134 301ZM115 286 134 301 117 300ZM136 285 152 281 134 301ZM152 281 145 298 134 301ZM152 281 169 287 169 297ZM152 281 169 297 145 298ZM224 281 241 289 244 299ZM224 281 244 299 221 295ZM241 289 251 286 250 299ZM241 289 250 299 244 299ZM251 286 273 281 269 302ZM251 286 269 302 250 299ZM374 290 378 303 363 300ZM374 290 393 289 393 300ZM408 289 415 285 408 302ZM480 280 494 285 481 299ZM558 289 554 301 542 298ZM602 283 615 289 612 298ZM718 285 736 300 715 295ZM91 300 103 297 89 316ZM103 297 106 319 89 316ZM103 297 117 300 125 315ZM103 297 125 315 106 319ZM117 300 134 301 125 315ZM134 301 134 316 125 315ZM134 301 145 298 134 316ZM145 298 155 313 134 316ZM145 298 169 297 155 313ZM269 302 281 297 266 313ZM363 300 378 303 359 318ZM378 303 393 300 373 317ZM393 300 385 313 373 317ZM465 305 481 299 465 320ZM524 300 542 298 540 318ZM554 301 569 298 565 310ZM554 301 565 310 556 318ZM626 301 646 296 626 319ZM646 296 664 298 646 313ZM715 295 717 310 704 316ZM736 300 754 303 748 319ZM765 305 777 316 768 313ZM62 315 75 333 58 334ZM71 314 89 316 75 333ZM89 316 87 327 75 333ZM89 316 106 319 87 327ZM125 315 125 328 104 327ZM200 318 210 311 193 327ZM243 320 242 328 222 325ZM243 320 259 314 251 332ZM266 313 285 315 289 326ZM266 313 289 326 266 328ZM285 315 297 312 299 334ZM285 315 299 334 289 326ZM359 318 373 317 375 327ZM359 318 375 327 357 335ZM435 316 451 327 434 327ZM465 320 469 326 451 327ZM465 320 481 314 469 326ZM521 312 526 328 509 332ZM588 313 602 313 599 330ZM588 313 599 330 581 331ZM670 319 691 320 694 334ZM748 319 768 313 767 327ZM748 319 767 327 749 332ZM75 333 71 342 55 340ZM75 333 87 327 88 344ZM75 333 88 344 71 342ZM87 327 104 327 88 344ZM104 327 100 343 88 344ZM104 327 125 328 100 343ZM125 328 121 342 100 343ZM176 333 193 327 199 348ZM176 333 199 348 178 340ZM328 332 350 344 328 341ZM424 331 434 327 439 341ZM424 331 439 341 419 345ZM451 327 469 326 453 340ZM469 326 467 348 453 340ZM480 330 493 333 500 346ZM581 331 600 344 582 342ZM679 333 694 334 687 347ZM121 342 116 360 110 361ZM164 347 178 340 169 362ZM178 340 181 365 169 362ZM178 340 199 348 181 365ZM208 340 207 356 197 357ZM208 340 229 346 207 356ZM229 346 220 363 207 356ZM251 348 267 349 252 361ZM365 347 372 355 359 363ZM378 348 391 345 391 361ZM378 348 391 361 372 355ZM453 340 467 348 466 356ZM453 340 466 356 446 358ZM477 345 482 356 466 356ZM477 345 500 346 482 356ZM539 342 553 341 542 355ZM749 342 760 343 755 361ZM169 362 181 365 184 376ZM169 362 184 376 161 372ZM181 365 197 357 191 379ZM181 365 191 379 184 376ZM372 355 391 361 371 378ZM408 362 423 371 410 376ZM446 358 447 374 438 370ZM446 358 466 356 447 374ZM506 355 514 376 497 374ZM524 357 544 379 529 376ZM542 355 552 378 544 379ZM725 364 739 365 724 376ZM134 375 151 374 150 386ZM151 374 161 372 169 389ZM151 374 169 389 150 386ZM161 372 184 376 184 391ZM161 372 184 391 169 389ZM184 376 191 379 184 391ZM191 379 191 388 184 391ZM314 379 315 395 298 385ZM596 374 617 380 600 389ZM646 371 661 378 660 389ZM692 372 702 374 703 388ZM692 372 703 388 687 385ZM762 376 777 373 777 391ZM762 376 777 391 761 387ZM65 385 73 386 64 403ZM73 386 72 400 64 403ZM137 389 136 409 119 402ZM150 386 152 402 136 409ZM237 389 244 406 222 405ZM325 386 347 388 343 405ZM325 386 343 405 325 406ZM347 388 358 390 343 405ZM358 390 361 402 343 405ZM373 391 390 395 394 406ZM373 391 394 406 375 400ZM390 395 410 385 410 400ZM390 395 410 400 394 406ZM421 393 421 407 410 400ZM464 388 483 404 468 401ZM565 388 583 395 588 410ZM740 388 754 391 736 402ZM107 402 119 402 115 422ZM136 409 152 402 145 421ZM136 409 145 421 134 424ZM167 410 181 401 185 421ZM181 401 198 409 192 417ZM181 401 192 417 185 421ZM198 409 208 401 192 417ZM222 405 244 406 222 417ZM244 406 243 421 222 417ZM325 406 328 418 318 423ZM394 406 410 400 402 424ZM410 400 421 407 402 424ZM446 401 454 425 439 417ZM511 407 526 403 521 417ZM511 407 521 417 506 422ZM588 410 600 403 590 415ZM680 402 693 401 673 424ZM693 401 701 419 686 420ZM88 424 89 436 70 435ZM101 422 104 430 89 436ZM134 424 135 436 122 437ZM134 424 145 421 152 440ZM134 424 152 440 135 436ZM192 417 194 440 179 433ZM208 419 222 417 209 434ZM222 417 224 431 209 434ZM222 417 245 430 224 431ZM318 423 328 418 319 438ZM345 424 347 433 334 430ZM356 422 376 420 373 440ZM356 422 373 440 362 436ZM439 417 454 425 432 436ZM506 422 511 435 497 433ZM506 422 521 417 522 436ZM506 422 522 436 511 435ZM521 417 542 416 538 439ZM673 424 686 420 694 430ZM686 420 701 419 704 438ZM686 420 704 438 694 430ZM717 422 731 423 723 431ZM58 430 70 435 63 446ZM70 435 77 449 63 446ZM70 435 89 436 77 449ZM122 437 135 436 119 445ZM169 437 167 448 145 447ZM169 437 179 433 167 448ZM179 433 199 446 178 447ZM256 439 254 445 243 451ZM256 439 267 436 269 449ZM267 436 284 432 269 449ZM284 432 297 431 299 452ZM284 432 299 452 287 448ZM297 431 319 438 299 452ZM347 433 349 447 329 451ZM362 436 365 452 349 447ZM362 436 373 440 365 452ZM373 440 374 452 365 452ZM467 434 484 449 465 450ZM522 436 538 439 542 453ZM633 432 642 438 626 446ZM694 430 704 438 704 451ZM731 432 739 446 725 453ZM731 432 748 450 739 446ZM768 435 777 435 777 448ZM768 435 777 448 760 455ZM63 446 77 449 79 468ZM63 446 79 468 55 463ZM119 445 132 451 135 465ZM119 445 135 465 120 464ZM132 451 145 447 151 464ZM132 451 151 464 135 465ZM145 447 168 462 151 464ZM269 449 287 448 285 470ZM269 449 285 470 273 466ZM287 448 299 452 299 469ZM445 451 465 450 461 461ZM509 450 525 453 507 469ZM525 453 542 453 535 467ZM572 451 588 453 586 463ZM572 451 586 463 568 462ZM611 453 626 446 619 463ZM739 446 748 450 737 461ZM120 464 135 465 139 475ZM135 465 151 464 139 475ZM151 464 151 485 139 475ZM168 462 163 485 151 485ZM184 466 190 463 182 475ZM210 464 207 483 193 479ZM238 468 253 467 238 475ZM253 467 273 466 256 476ZM273 466 285 470 271 483ZM331 460 326 481 311 482ZM331 460 349 461 326 481ZM349 461 343 479 326 481ZM349 461 361 462 343 479ZM379 466 372 485 362 476ZM379 466 393 465 388 484ZM379 466 388 484 372 485ZM407 467 409 480 388 484ZM407 467 418 462 416 476ZM407 467 416 476 409 480ZM439 461 454 462 450 480ZM454 462 461 461 461 480ZM687 465 701 465 706 483ZM687 465 706 483 691 477ZM722 464 737 461 732 481ZM124 477 139 475 117 492ZM139 475 151 485 133 500ZM163 485 165 495 155 498ZM193 479 207 483 198 496ZM207 483 207 496 198 496ZM222 483 238 475 229 498ZM238 475 236 497 229 498ZM256 476 253 491 236 497ZM256 476 271 483 275 497ZM256 476 275 497 253 491ZM295 480 311 482 319 498ZM311 482 326 481 333 498ZM311 482 333 498 319 498ZM326 481 343 479 333 498ZM343 479 346 494 333 498ZM343 479 362 476 346 494ZM362 476 372 485 379 493ZM409 480 416 476 425 498ZM409 480 425 498 410 491ZM450 480 447 492 432 499ZM461 480 465 492 447 492ZM461 480 476 480 480 499ZM461 480 480 499 465 492ZM522 476 528 497 509 498ZM522 476 537 484 545 498ZM522 476 545 498 528 497ZM585 483 601 482 583 496ZM601 482 612 483 610 495ZM601 482 610 495 604 498ZM691 477 688 499 673 492ZM722 475 732 481 737 494ZM722 475 737 494 716 493ZM755 475 766 482 752 498ZM133 500 155 498 147 515ZM133 500 147 515 135 505ZM155 498 165 495 147 515ZM229 498 236 497 224 515ZM236 497 244 512 224 515ZM236 497 253 491 251 511ZM236 497 251 511 244 512ZM253 491 275 497 251 511ZM275 497 269 515 251 511ZM303 500 319 498 315 512ZM303 500 315 512 301 509ZM319 498 333 498 334 510ZM319 498 334 510 315 512ZM363 498 379 493 355 514ZM395 495 410 491 409 512ZM395 495 409 512 389 513ZM410 491 425 498 423 505ZM410 491 423 505 409 512ZM432 499 447 492 433 506ZM447 492 455 514 433 506ZM465 492 480 499 461 511ZM480 499 481 505 461 511ZM509 498 528 508 511 508ZM528 497 545 498 540 509ZM528 497 540 509 528 508ZM625 491 648 494 631 513ZM673 492 688 499 679 506ZM752 498 761 497 770 507ZM42 514 57 529 50 523ZM95 510 91 528 74 529ZM135 505 147 515 136 527ZM224 515 244 512 228 526ZM244 512 238 530 228 526ZM251 511 253 522 238 530ZM301 509 299 528 288 527ZM301 509 315 512 311 523ZM301 509 311 523 299 528ZM409 512 408 523 388 524ZM494 513 511 508 495 529ZM511 508 512 526 495 529ZM511 508 524 526 512 526ZM528 508 540 509 538 529ZM528 508 538 529 524 526ZM540 509 560 512 558 529ZM540 509 558 529 538 529ZM613 506 618 528 604 529ZM613 506 631 513 618 528ZM631 513 632 529 618 528ZM679 506 693 507 691 528ZM679 506 691 528 673 520ZM740 515 747 508 737 530ZM74 529 70 543 61 543ZM91 528 103 521 106 538ZM103 521 123 525 106 538ZM123 525 118 541 106 538ZM180 523 190 540 175 543ZM213 520 226 542 209 535ZM228 526 238 530 226 542ZM238 530 253 522 255 541ZM238 530 255 541 241 539ZM253 522 265 526 267 544ZM253 522 267 544 255 541ZM288 527 299 528 290 543ZM363 524 380 528 373 537ZM363 524 373 537 362 540ZM388 524 408 523 402 542ZM388 524 402 542 389 538ZM475 524 495 529 485 543ZM495 529 500 544 485 543ZM495 529 512 526 500 544ZM538 529 535 544 520 537ZM604 529 618 528 610 537ZM604 529 610 537 605 538ZM618 528 632 529 610 537ZM673 520 671 543 656 536ZM61 543 70 543 63 559ZM86 537 106 538 104 550ZM86 537 104 550 87 556ZM118 541 123 558 104 550ZM175 543 190 540 181 559ZM209 535 226 542 207 552ZM226 542 229 554 207 552ZM226 542 241 539 229 554ZM241 539 255 541 251 552ZM241 539 251 552 236 556ZM255 541 267 544 270 556ZM255 541 270 556 251 552ZM290 543 305 538 299 550ZM305 538 320 535 317 550ZM305 538 317 550 299 550ZM362 540 357 557 347 557ZM373 537 377 555 357 557ZM373 537 389 538 377 555ZM447 538 453 558 432 554ZM466 542 466 558 453 558ZM466 542 485 543 466 558ZM500 544 512 542 500 558ZM557 541 560 556 537 557ZM605 538 610 537 603 551ZM690 545 685 559 679 559ZM690 545 709 543 706 558ZM690 545 706 558 685 559ZM709 543 720 543 720 556ZM709 543 720 556 706 558ZM87 556 104 550 95 570ZM154 555 149 568 139 566ZM160 553 181 559 181 575ZM160 553 181 575 168 566ZM181 559 195 556 181 575ZM270 556 272 574 254 571ZM270 556 286 557 287 573ZM270 556 287 573 272 574ZM317 550 330 554 317 565ZM347 557 357 557 357 575ZM357 557 377 555 374 572ZM357 557 374 572 357 575ZM537 557 538 573 529 574ZM746 550 765 553 762 569ZM62 567 74 566 57 582ZM95 570 103 566 91 587ZM122 574 118 580 106 587ZM149 568 149 581 130 580ZM149 568 168 566 161 585ZM149 568 161 585 149 581ZM168 566 181 575 185 587ZM254 571 272 574 257 581ZM272 574 275 583 257 581ZM332 574 332 583 319 588ZM344 574 357 575 340 582ZM357 575 374 572 377 586ZM374 572 387 568 377 586ZM403 568 416 569 425 584ZM403 568 425 584 401 581ZM416 569 437 586 425 584ZM718 574 730 567 716 581ZM80 587 91 587 79 596ZM130 580 131 598 124 597ZM130 580 149 581 131 598ZM149 581 154 600 131 598ZM149 581 161 585 154 600ZM257 581 275 583 265 600ZM257 581 265 600 257 600ZM392 582 401 581 409 596ZM392 582 409 596 387 601ZM401 581 425 584 417 595ZM401 581 417 595 409 596ZM522 584 525 605 507 600ZM522 584 540 581 525 605ZM614 584 631 585 613 599ZM662 589 656 603 640 599ZM672 580 689 581 687 600ZM689 581 705 587 706 602ZM761 580 777 604 765 601ZM124 597 131 598 116 610ZM131 598 154 600 155 619ZM131 598 155 619 133 613ZM192 602 209 596 206 612ZM192 602 206 612 197 615ZM209 596 230 600 227 616ZM209 596 227 616 206 612ZM237 595 243 619 227 616ZM237 595 257 600 260 612ZM237 595 260 612 243 619ZM257 600 265 600 260 612ZM265 600 266 619 260 612ZM265 600 288 600 266 619ZM297 600 312 614 302 612ZM379 597 385 615 377 618ZM387 601 409 596 407 617ZM387 601 407 617 385 615ZM409 596 417 595 422 612ZM409 596 422 612 407 617ZM507 600 527 618 512 614ZM670 601 677 611 660 610ZM670 601 687 600 677 611ZM765 601 777 618 763 612ZM80 613 87 630 70 625ZM100 619 100 627 87 630ZM100 619 116 610 100 627ZM133 613 155 619 146 630ZM133 613 146 630 140 625ZM197 615 206 612 193 629ZM206 612 210 627 193 629ZM206 612 227 616 220 626ZM206 612 220 626 210 627ZM227 616 243 619 236 626ZM227 616 236 626 220 626ZM260 612 266 619 256 630ZM330 617 325 626 320 630ZM330 617 341 618 347 629ZM330 617 347 629 325 626ZM341 618 361 615 347 629ZM361 615 362 627 347 629ZM361 615 377 618 378 630ZM385 615 386 630 378 630ZM385 615 407 617 386 630ZM407 617 402 630 386 630ZM447 614 452 630 432 626ZM447 614 470 612 452 630ZM552 613 565 611 552 628ZM565 611 571 630 552 628ZM644 612 660 610 662 630ZM644 612 662 630 648 630ZM747 618 755 630 735 626ZM763 612 765 627 755 630ZM19 630 31 627 15 630ZM100 627 101 630 93 630ZM100 627 115 630 101 630ZM140 625 146 630 134 630ZM170 626 178 630 182 630ZM193 629 208 630 192 630ZM210 627 220 626 208 630ZM220 626 225 630 208 630ZM220 626 236 626 225 630ZM236 626 242 630 225 630ZM236 626 258 630 242 630ZM268 630 287 628 284 630ZM362 627 360 630 341 630ZM617 627 620 630 596 630ZM678 628 688 630 686 630Z"/><path fill="#dbedc6" stroke="#dbedc6" d="M130 0 149 0 135 17ZM601 0 595 11 583 10ZM737 0 733 13 716 11ZM269 19 281 14 267 27ZM318 19 319 30 301 34ZM499 18 491 33 484 33ZM674 11 694 20 673 30ZM694 20 705 15 704 34ZM694 20 704 34 691 34ZM90 33 103 27 106 48ZM90 33 106 48 93 45ZM267 27 282 27 266 42ZM332 33 341 32 349 50ZM673 30 691 34 671 50ZM56 46 72 43 63 58ZM136 45 150 47 155 56ZM180 50 197 49 180 64ZM401 44 420 43 417 65ZM662 44 677 63 664 61ZM691 48 701 49 705 64ZM691 48 705 64 686 60ZM88 55 102 55 90 75ZM102 55 107 70 90 75ZM180 64 194 60 195 77ZM180 64 195 77 180 74ZM254 58 258 73 236 72ZM265 56 280 63 280 73ZM388 65 408 80 385 75ZM762 55 777 56 777 75ZM122 72 118 85 108 92ZM195 77 197 88 185 87ZM236 72 258 73 237 94ZM258 73 255 87 237 94ZM280 73 302 77 284 86ZM345 71 364 72 346 94ZM364 72 363 89 346 94ZM432 80 447 76 454 87ZM432 80 454 87 435 91ZM498 75 514 77 500 94ZM540 70 544 90 520 92ZM674 74 695 76 675 91ZM695 76 704 74 702 94ZM163 93 185 87 167 109ZM222 86 240 102 228 108ZM520 92 544 90 538 103ZM544 90 556 85 560 101ZM544 90 560 101 538 103ZM675 91 693 100 674 108ZM731 87 751 92 748 103ZM79 105 72 120 65 115ZM118 100 119 120 104 117ZM298 110 311 120 298 116ZM483 100 494 125 481 118ZM642 104 664 100 649 119ZM95 125 104 117 104 133ZM95 125 104 133 86 137ZM104 117 119 120 104 133ZM119 120 118 140 104 133ZM139 117 153 123 149 134ZM193 119 205 139 197 132ZM213 116 222 123 224 138ZM289 125 298 116 296 136ZM289 125 296 136 286 139ZM298 116 311 120 296 136ZM118 140 124 155 110 146ZM179 132 197 132 198 155ZM179 132 198 155 184 146ZM197 132 205 139 198 155ZM326 133 326 155 310 147ZM378 140 371 150 357 153ZM494 139 494 153 485 151ZM674 137 689 134 670 148ZM110 146 124 155 102 169ZM184 146 198 155 192 166ZM310 147 327 161 318 165ZM468 148 485 151 477 162ZM616 149 630 154 614 167ZM641 147 642 166 631 163ZM662 145 670 148 656 169ZM686 149 702 151 686 170ZM762 146 760 166 752 167ZM392 163 402 180 390 183ZM406 164 423 165 418 183ZM406 164 418 183 402 180ZM469 160 477 162 467 180ZM715 160 738 181 717 179ZM418 183 432 185 436 192ZM539 179 559 176 551 198ZM614 184 627 180 615 196ZM627 180 645 183 633 195ZM673 178 674 198 657 197ZM769 177 777 177 777 192ZM101 200 102 215 90 211ZM116 194 140 198 118 211ZM251 196 269 198 268 210ZM251 196 268 210 253 207ZM332 199 325 213 320 214ZM482 200 477 214 469 213ZM674 198 670 214 660 214ZM763 193 777 192 777 212ZM763 193 777 212 760 211ZM235 212 253 207 256 228ZM235 212 256 228 238 226ZM719 209 740 206 731 230ZM751 211 746 229 731 230ZM105 228 102 245 90 245ZM134 226 130 242 122 235ZM223 223 238 226 224 242ZM407 222 419 242 404 244ZM603 226 601 243 583 236ZM619 224 625 224 635 237ZM625 224 646 230 635 237ZM122 235 130 242 135 250ZM176 244 195 235 198 254ZM195 235 215 258 198 254ZM316 238 325 245 331 254ZM453 238 460 238 469 259ZM453 238 469 259 447 253ZM479 241 484 250 469 259ZM479 241 498 244 484 250ZM572 244 583 236 581 253ZM572 244 581 253 571 258ZM181 252 182 267 160 274ZM331 254 341 260 348 270ZM331 254 348 270 326 265ZM376 260 392 254 379 267ZM392 254 404 251 391 266ZM404 251 402 273 391 266ZM557 253 558 268 542 265ZM731 260 754 256 733 272ZM754 256 764 253 749 273ZM109 268 107 282 85 281ZM109 268 117 270 107 282ZM117 270 133 274 115 286ZM160 274 182 267 175 281ZM245 274 251 268 251 286ZM326 265 348 270 348 283ZM326 265 348 283 329 290ZM391 266 402 273 408 289ZM463 267 480 280 466 284ZM558 268 574 280 558 289ZM644 266 659 271 645 284ZM723 274 733 272 735 281ZM195 285 208 281 193 305ZM224 281 221 295 208 303ZM357 283 374 290 363 300ZM673 287 695 297 679 304ZM746 281 754 303 736 300ZM746 281 763 284 765 305ZM746 281 765 305 754 303ZM524 300 540 318 521 312ZM554 301 556 318 540 318ZM664 298 679 304 670 319ZM695 297 691 320 670 319ZM200 318 193 327 176 333ZM328 320 346 310 328 332ZM659 314 670 319 679 333ZM493 333 509 332 510 342ZM493 333 510 342 500 346ZM509 332 526 328 510 342ZM679 333 687 347 676 348ZM500 346 510 342 506 355ZM582 342 600 344 600 359ZM582 342 600 359 583 362ZM658 348 676 348 676 358ZM706 345 703 360 687 356ZM359 363 372 355 365 377ZM658 359 671 379 661 378ZM348 371 365 377 347 388ZM544 379 552 378 556 389ZM544 379 556 389 541 388ZM568 378 583 395 565 388ZM587 378 600 389 583 395ZM617 380 612 387 600 389ZM646 371 660 389 640 394ZM315 395 325 406 310 404ZM439 393 446 401 433 401ZM451 391 464 388 446 401ZM583 395 600 389 588 410ZM375 400 394 406 391 424ZM375 400 391 424 376 420ZM446 401 468 401 463 415ZM446 401 463 415 454 425ZM511 407 506 422 490 424ZM755 404 750 416 731 423ZM376 420 391 424 385 438ZM376 420 385 438 373 440ZM630 417 642 438 633 432ZM373 440 385 438 374 452ZM731 432 746 433 748 450ZM269 449 273 466 253 467ZM329 451 349 447 331 460ZM349 447 349 461 331 460ZM525 453 535 467 527 461ZM725 453 739 446 722 464ZM760 455 777 448 769 470ZM439 461 450 480 439 476ZM454 462 461 480 450 480ZM535 467 537 484 522 476ZM674 466 679 476 660 478ZM674 466 687 465 691 477ZM674 466 691 477 679 476ZM545 498 554 491 560 512ZM545 498 560 512 540 509ZM610 495 625 491 631 513ZM610 495 631 513 613 506ZM716 493 737 494 740 515ZM716 493 740 515 718 509ZM752 498 770 507 747 508ZM512 526 524 526 520 537ZM524 526 538 529 520 537ZM662 526 673 520 656 536ZM447 538 466 542 453 558ZM574 553 573 570 558 574ZM603 551 614 570 598 571ZM317 565 319 588 303 582ZM455 573 469 575 447 580ZM581 573 598 571 597 582ZM614 570 635 566 631 585ZM614 570 631 585 614 584ZM303 582 316 602 297 600ZM476 590 494 587 490 605ZM506 588 507 600 490 605ZM689 581 706 602 687 600ZM735 582 747 584 731 605ZM350 603 341 618 330 617ZM479 602 490 605 499 612ZM507 600 512 614 499 612ZM656 603 670 601 660 610ZM765 601 777 604 777 618ZM660 610 677 611 678 628ZM660 610 678 628 662 630ZM721 616 737 620 735 626ZM40 630 62 628 44 630ZM87 630 100 627 93 630Z"/><path fill="#dbf0c6" stroke="#dbf0c6" d="M176 0 194 0 183 13ZM194 0 213 0 205 15ZM221 0 222 11 205 15ZM145 17 153 33 139 33ZM205 15 222 11 207 32ZM281 14 282 27 267 27ZM365 11 372 12 364 33ZM387 15 387 33 378 30ZM266 42 280 63 265 56ZM303 49 311 47 311 64ZM475 43 496 45 477 60ZM631 47 641 40 632 62ZM671 50 691 48 677 63ZM691 48 686 60 677 63ZM102 55 122 61 107 70ZM132 60 131 73 122 72ZM132 60 155 56 131 73ZM358 60 371 59 380 80ZM152 72 168 80 163 93ZM226 71 237 94 222 86ZM185 87 197 88 193 104ZM149 102 153 123 139 117ZM437 110 455 103 437 117ZM65 115 72 120 59 136ZM139 117 149 134 133 136ZM528 122 545 116 522 134ZM104 133 118 140 110 146ZM572 139 583 145 571 152ZM659 136 662 145 641 147ZM659 136 674 137 670 148ZM659 136 670 148 662 145ZM310 147 326 155 327 161ZM371 150 377 169 358 168ZM431 155 451 149 455 162ZM630 154 631 163 614 167ZM358 168 377 169 363 185ZM585 169 604 180 582 178ZM642 166 656 169 645 183ZM121 178 116 194 101 200ZM512 183 526 178 513 194ZM746 180 769 177 763 193ZM388 196 401 194 407 207ZM388 196 407 207 385 215ZM423 197 436 192 416 206ZM376 205 392 226 376 226ZM528 214 523 224 511 222ZM719 209 731 230 715 227ZM256 228 254 242 236 243ZM422 225 438 221 436 244ZM482 224 498 228 479 241ZM556 230 565 226 572 244ZM556 230 572 244 559 243ZM316 238 331 254 319 250ZM559 243 571 258 557 253ZM181 252 198 254 195 268ZM181 252 195 268 182 267ZM198 254 215 258 195 268ZM319 250 331 254 318 268ZM557 253 571 258 558 268ZM571 258 574 274 558 268ZM647 250 659 271 644 266ZM207 267 208 281 195 285ZM463 267 481 272 480 280ZM760 274 777 283 763 284ZM357 283 363 300 346 304ZM574 280 586 283 569 298ZM665 283 664 298 646 296ZM58 334 75 333 55 340ZM467 348 477 345 466 356ZM494 365 506 355 497 374ZM703 360 702 374 692 372ZM137 389 150 386 136 409ZM439 393 451 391 446 401ZM600 403 597 423 590 415ZM590 415 604 435 582 431ZM284 432 287 448 269 449ZM522 436 542 453 525 453ZM349 447 365 452 361 462ZM349 447 361 462 349 461ZM365 452 374 452 361 462ZM484 449 494 467 483 470ZM596 447 611 453 619 463ZM273 466 271 483 256 476ZM753 461 769 470 766 482ZM333 498 346 494 334 510ZM447 492 465 492 455 514ZM509 498 528 497 528 508ZM706 493 703 505 693 507ZM389 513 409 512 388 524ZM511 508 528 508 524 526ZM602 512 613 506 604 529ZM461 523 466 542 447 538ZM475 524 485 543 466 542ZM512 526 520 537 512 542ZM691 528 690 545 671 543ZM432 542 447 538 432 554ZM574 553 581 550 573 570ZM746 550 762 569 752 575ZM357 575 364 581 340 582ZM357 575 377 586 364 581ZM581 573 588 582 568 584ZM581 573 597 582 588 582ZM635 566 645 572 649 580ZM364 599 361 615 341 618ZM721 616 735 626 716 625ZM597 628 596 630 584 630ZM626 627 648 630 625 630Z"/><path fill="#d5eac3" stroke="#d5eac3" d="M194 0 194 17 183 13ZM344 19 365 11 364 33ZM506 59 514 77 498 75ZM664 73 674 74 662 93ZM274 95 284 86 282 108ZM297 86 298 110 282 108ZM761 85 770 106 748 103ZM545 116 555 123 551 132ZM716 117 738 138 720 132ZM721 147 737 166 715 160ZM671 160 686 170 686 184ZM730 194 751 211 740 206ZM630 206 645 210 646 230ZM630 206 646 230 625 224ZM690 211 707 214 701 220ZM376 226 380 243 358 241ZM603 226 619 224 612 243ZM687 347 706 345 687 356ZM483 394 495 406 483 404ZM660 389 663 404 645 407ZM630 417 644 416 642 438ZM511 435 509 450 495 454ZM610 495 613 506 602 512ZM574 597 590 600 584 614ZM687 600 706 602 708 619Z"/><path fill="#d5eac0" stroke="#d5eac0" d="M213 0 221 0 205 15ZM748 0 760 20 753 11ZM183 13 194 17 190 28ZM482 10 499 18 484 33ZM341 32 364 33 357 50ZM341 32 357 50 349 50ZM461 26 466 44 452 40ZM136 45 155 56 132 60ZM281 47 297 56 280 63ZM452 40 466 44 445 59ZM466 44 465 60 445 59ZM466 44 475 43 477 60ZM611 49 632 62 620 56ZM540 70 550 75 556 85ZM540 70 556 85 544 90ZM520 92 522 100 509 103ZM538 103 555 123 545 116ZM545 116 540 134 522 134ZM409 151 423 165 406 164ZM721 147 736 150 737 166ZM448 177 467 180 466 194ZM448 177 466 194 449 195ZM101 200 116 194 118 211ZM101 200 118 211 102 215ZM209 198 227 195 209 207ZM251 196 253 207 235 212ZM364 197 376 195 356 213ZM525 200 528 214 512 214ZM575 195 581 196 586 208ZM644 200 657 197 660 214ZM644 200 660 214 645 210ZM657 197 674 198 660 214ZM730 194 749 197 751 211ZM209 207 223 223 212 228ZM320 214 325 213 334 226ZM569 214 586 208 580 221ZM760 211 761 220 746 229ZM482 224 479 241 460 238ZM701 220 715 227 701 243ZM224 242 236 243 237 250ZM347 243 341 260 331 254ZM447 253 469 259 451 270ZM670 259 687 260 670 270ZM305 265 299 284 288 290ZM689 270 710 285 686 286ZM749 273 746 281 735 281ZM329 290 348 283 346 304ZM329 290 346 304 328 302ZM447 284 466 284 453 301ZM505 281 524 300 511 299ZM574 280 569 298 554 301ZM673 287 686 286 695 297ZM763 284 777 283 777 300ZM763 284 777 300 765 305ZM612 298 612 313 602 313ZM612 298 626 319 612 313ZM664 298 670 319 659 314ZM422 312 424 331 407 327ZM318 348 328 341 313 357ZM620 343 613 359 600 359ZM731 343 749 342 739 365ZM760 343 777 362 768 355ZM600 359 613 359 596 374ZM410 376 423 371 421 393ZM497 374 500 392 483 394ZM529 376 544 379 541 388ZM529 376 541 388 528 390ZM671 379 687 385 676 388ZM746 378 754 391 740 388ZM541 388 543 402 526 403ZM640 394 645 407 626 400ZM660 389 676 388 663 404ZM736 402 731 423 717 422ZM731 423 750 416 746 433ZM731 423 746 433 731 432ZM497 433 511 435 495 454ZM555 437 570 435 572 451ZM582 431 588 453 572 451ZM748 450 769 470 753 461ZM535 467 550 469 537 484ZM648 470 640 479 626 478ZM439 476 450 480 432 499ZM450 480 461 480 447 492ZM640 479 660 478 661 495ZM640 479 661 495 648 494ZM648 494 661 495 648 508ZM718 509 717 521 703 522ZM703 522 717 521 720 543ZM703 522 720 543 709 543ZM610 537 620 557 603 551ZM762 537 777 535 777 554ZM762 537 777 554 765 553ZM603 551 620 557 614 570ZM469 575 483 568 460 589ZM494 587 506 588 490 605ZM735 582 731 605 716 597ZM597 605 596 616 584 614ZM687 600 708 619 689 620ZM470 612 481 626 461 627ZM584 614 596 616 597 628ZM677 611 689 620 678 628ZM347 629 341 630 331 630ZM432 626 439 630 425 630Z"/><path fill="#e4f3d2" stroke="#e4f3d2" d="M275 0 269 19 251 12ZM451 0 455 17 434 16ZM466 0 479 0 465 16ZM63 16 57 29 49 32ZM183 13 178 25 162 30ZM372 12 378 30 364 33ZM524 14 536 25 523 31ZM364 33 378 30 374 45ZM364 33 374 45 357 50ZM656 34 662 44 641 40ZM656 34 673 30 662 44ZM106 48 124 44 102 55ZM357 50 374 45 358 60ZM374 45 371 59 358 60ZM641 40 640 64 632 62ZM751 49 752 62 736 64ZM763 41 762 55 752 62ZM155 56 152 72 131 73ZM490 58 498 75 485 71ZM490 58 506 59 498 75ZM632 62 640 64 634 71ZM640 64 649 77 634 71ZM752 62 762 55 762 73ZM752 62 762 73 748 80ZM581 73 588 94 569 94ZM634 71 649 77 630 92ZM454 87 462 110 455 103ZM463 87 479 89 462 110ZM569 94 588 94 575 102ZM588 94 583 108 575 102ZM424 109 421 119 409 118ZM455 103 462 110 461 124ZM560 101 574 124 555 123ZM575 102 583 108 574 124ZM629 109 635 119 620 121ZM629 109 642 104 635 119ZM494 125 510 117 494 139ZM555 123 574 124 551 132ZM635 119 631 136 619 131ZM635 119 649 119 646 133ZM635 119 646 133 631 136ZM296 136 300 148 282 148ZM619 131 631 136 616 149ZM720 132 721 147 702 151ZM765 131 762 146 746 155ZM528 145 529 163 513 163ZM702 151 715 160 703 161ZM736 150 752 167 737 166ZM455 162 448 177 432 185ZM513 163 529 163 526 178ZM686 170 703 161 707 183ZM703 161 715 160 717 179ZM737 166 752 167 738 181ZM376 195 388 196 385 215ZM376 195 385 215 376 205ZM551 198 575 195 555 213ZM600 197 597 206 586 208ZM615 196 633 195 615 205ZM376 205 376 226 364 226ZM469 213 468 229 447 220ZM364 226 376 226 358 241ZM447 220 468 229 460 238ZM436 244 453 238 432 250ZM453 238 447 253 432 250ZM660 237 672 243 662 252ZM672 243 670 259 662 252ZM709 259 701 272 689 270ZM498 271 507 265 505 281ZM498 271 505 281 494 285ZM507 265 527 269 505 281ZM585 265 604 270 602 283ZM585 265 602 283 586 283ZM619 268 627 273 615 289ZM415 285 440 290 424 296ZM494 285 505 281 511 299ZM494 285 511 299 498 304ZM586 283 588 304 569 298ZM586 283 602 283 588 304ZM602 283 600 299 588 304ZM615 289 631 282 612 298ZM665 283 673 287 664 298ZM569 298 588 304 565 310ZM588 304 588 313 565 310ZM481 314 491 311 480 330ZM717 310 740 319 715 332ZM740 319 737 328 715 332ZM299 334 302 344 288 341ZM641 332 641 346 628 349ZM749 332 767 327 749 342ZM628 349 641 346 632 363ZM613 359 632 363 632 370ZM617 380 632 370 628 386ZM617 380 628 386 612 387ZM298 385 302 403 287 404ZM421 393 439 393 433 401ZM556 389 565 388 573 403ZM556 389 573 403 557 408ZM612 387 626 400 615 410ZM703 388 722 391 700 401ZM287 404 302 403 281 424ZM421 407 433 401 419 423ZM495 406 511 407 490 424ZM543 402 557 408 542 416ZM700 401 715 405 717 422ZM454 425 463 415 467 434ZM463 415 480 436 467 434ZM453 434 467 434 445 451ZM467 434 465 450 445 451ZM555 437 554 445 542 453ZM660 436 678 439 655 452ZM439 453 439 461 418 462ZM626 446 634 461 619 463ZM703 505 703 522 691 528ZM435 525 432 542 420 539ZM767 521 762 537 751 540ZM297 600 302 612 286 612ZM597 605 613 599 596 616ZM620 616 617 627 597 628ZM287 628 300 627 304 630ZM287 628 304 630 284 630ZM507 629 505 630 493 630ZM507 629 525 630 505 630ZM765 627 777 630 762 630Z"/><path fill="#e4f3cf" stroke="#e4f3cf" d="M286 0 281 14 269 19ZM403 0 423 0 406 13ZM662 0 657 13 646 11ZM724 0 716 11 705 15ZM251 12 269 19 267 27ZM434 16 452 27 434 35ZM524 14 536 16 536 25ZM583 10 603 27 584 34ZM595 11 611 14 612 28ZM646 11 657 13 642 29ZM123 35 139 33 136 45ZM245 35 260 29 244 41ZM749 27 760 33 763 41ZM749 27 763 41 751 49ZM760 33 777 45 763 41ZM93 45 88 55 75 57ZM180 50 180 64 168 59ZM215 42 226 50 212 65ZM226 50 223 63 212 65ZM536 43 550 48 538 57ZM122 61 132 60 122 72ZM212 65 223 63 213 76ZM343 57 345 71 330 75ZM632 62 634 71 610 78ZM640 64 664 61 649 77ZM677 63 686 60 674 74ZM258 73 271 70 255 87ZM330 75 345 71 327 87ZM380 80 374 90 363 89ZM610 78 634 71 630 92ZM610 78 630 92 611 86ZM455 103 461 124 447 117ZM560 101 575 102 574 124ZM342 119 361 122 356 135ZM342 119 356 135 345 139ZM409 118 410 140 387 131ZM314 135 326 133 310 147ZM345 139 356 135 357 153ZM345 139 357 153 347 154ZM738 138 750 132 746 155ZM738 138 746 155 736 150ZM765 131 777 131 777 146ZM165 155 184 146 160 166ZM528 145 543 147 529 163ZM736 150 746 155 752 167ZM513 163 526 178 512 183ZM703 161 717 179 707 183ZM209 178 209 198 194 190ZM491 183 513 194 492 197ZM686 184 703 190 686 200ZM301 198 314 192 320 214ZM301 198 320 214 302 209ZM376 195 376 205 356 213ZM600 197 615 196 615 205ZM600 197 615 205 597 206ZM302 209 295 223 289 225ZM302 209 320 214 295 223ZM349 213 356 213 347 228ZM537 212 555 213 538 224ZM447 220 460 238 453 238ZM523 224 528 244 505 243ZM523 224 538 224 541 238ZM523 224 541 238 528 244ZM646 230 646 242 635 237ZM665 225 672 243 660 237ZM62 236 56 250 44 255ZM601 243 597 251 581 253ZM646 242 647 250 627 251ZM701 243 709 259 687 260ZM662 252 670 259 659 271ZM627 273 644 266 631 282ZM494 285 498 304 481 299ZM600 299 612 298 602 313ZM679 304 695 297 670 319ZM777 316 777 334 767 327ZM641 332 658 329 641 346ZM767 327 777 334 777 342ZM288 341 302 344 282 363ZM500 346 494 365 482 356ZM572 347 582 342 573 359ZM620 343 632 363 613 359ZM313 357 314 379 299 371ZM613 359 632 370 617 380ZM299 371 314 379 298 385ZM612 387 628 386 626 400ZM687 385 703 388 693 401ZM722 391 715 405 700 401ZM754 391 761 387 755 404ZM557 408 573 403 553 424ZM700 401 717 422 701 419ZM439 417 432 436 421 440ZM454 425 467 434 453 434ZM542 416 555 437 538 439ZM617 415 630 417 615 435ZM701 419 717 422 704 438ZM604 435 611 453 596 447ZM704 438 725 453 704 451ZM746 433 768 435 748 450ZM542 453 554 445 535 467ZM655 452 677 450 659 460ZM619 463 634 461 612 483ZM634 461 626 478 612 483ZM703 505 718 509 703 522ZM452 529 447 538 432 542ZM420 539 432 542 417 560ZM287 573 304 574 303 582ZM483 568 494 587 476 590ZM660 575 662 589 649 580ZM540 581 540 605 525 605ZM631 585 649 580 628 602ZM649 580 662 589 640 599ZM628 602 640 599 628 617ZM422 612 440 618 423 630ZM620 616 628 617 617 627ZM347 629 362 627 341 630ZM765 627 777 626 777 630Z"/><path fill="#def3c9" stroke="#def3c9" d="M299 0 320 0 318 19ZM72 33 90 33 93 45ZM349 50 358 60 343 57ZM110 107 118 100 104 117ZM431 155 455 162 433 166ZM121 178 131 176 140 198ZM90 211 102 215 89 225ZM238 226 256 228 236 243ZM80 254 86 268 73 269ZM274 265 288 290 273 281ZM195 285 193 305 181 300ZM735 281 746 281 736 300ZM208 303 221 295 229 317ZM208 303 229 317 210 311ZM210 311 222 325 207 328ZM242 328 235 342 229 346ZM266 328 288 341 267 349ZM229 346 244 358 220 363ZM197 357 207 356 207 371ZM207 356 225 372 207 371ZM244 358 252 376 240 376ZM482 356 477 373 460 376ZM325 406 343 405 328 418ZM185 421 192 417 179 433ZM345 424 356 422 347 433ZM463 415 476 425 480 436ZM334 430 347 433 329 451ZM678 439 694 430 685 452ZM287 448 299 469 285 470ZM251 511 265 526 253 522ZM461 511 481 505 475 524ZM461 511 475 524 461 523ZM461 523 475 524 466 542ZM118 541 132 543 135 550ZM406 550 416 569 403 568ZM33 573 27 582 18 588ZM320 630 325 626 331 630Z"/><path fill="#cfe4ba" stroke="#cfe4ba" d="M648 0 646 11 625 19ZM183 13 190 28 178 25ZM484 33 475 43 466 44ZM420 43 432 43 433 58ZM420 43 433 58 417 65ZM538 57 550 75 540 70ZM228 108 240 102 237 115ZM273 102 282 108 268 125ZM583 108 580 118 574 124ZM392 116 387 131 378 140ZM421 119 437 117 420 130ZM580 118 580 136 572 139ZM580 118 596 117 580 136ZM314 135 310 147 300 148ZM738 138 736 150 721 147ZM556 155 571 152 556 167ZM390 183 402 180 401 194ZM390 183 401 194 388 196ZM582 178 581 196 575 195ZM555 213 565 226 556 230ZM212 228 223 223 209 241ZM238 226 236 243 224 242ZM376 226 392 226 380 243ZM723 274 718 285 710 285ZM530 288 545 286 542 298ZM530 288 542 298 524 300ZM626 319 646 313 641 332ZM626 319 641 332 628 327ZM646 313 659 314 658 329ZM740 319 749 332 737 328ZM641 346 649 356 632 363ZM641 346 658 348 649 356ZM303 363 299 371 286 371ZM314 379 325 386 315 395ZM331 377 347 388 325 386ZM724 376 740 388 722 391ZM310 404 325 406 318 423ZM573 403 588 410 572 424ZM645 407 663 404 655 425ZM723 431 731 432 725 453ZM465 450 484 449 483 470ZM465 450 483 470 461 461ZM554 445 572 451 568 462ZM746 596 747 618 737 620ZM765 601 763 612 747 618ZM626 627 625 630 620 630Z"/><path fill="#d8edc6" stroke="#d8edc6" d="M748 0 770 0 760 20ZM611 49 620 56 599 58ZM168 59 168 80 152 72ZM180 74 195 77 185 87ZM520 92 538 103 522 100ZM282 108 289 125 268 125ZM298 110 315 102 311 120ZM674 108 680 116 657 123ZM543 147 556 167 537 169ZM283 182 300 177 289 194ZM422 267 415 285 408 289ZM435 316 434 327 424 331ZM521 312 540 318 526 328ZM587 378 596 374 600 389ZM281 424 304 418 297 431ZM732 481 752 498 737 494ZM303 582 297 600 288 600Z"/><path fill="#c9e1b7" stroke="#c9e1b7" d="M167 20 183 13 162 30ZM584 49 599 58 587 64ZM762 73 777 75 761 85ZM649 119 659 136 646 133ZM537 169 556 167 539 179ZM385 215 407 207 392 226ZM422 312 435 316 424 331ZM612 313 626 319 613 325ZM583 362 600 359 596 374ZM583 362 596 374 587 378ZM302 612 312 614 300 627Z"/><path fill="#d8edc3" stroke="#d8edc3" d="M281 14 301 19 301 34ZM281 14 301 34 282 27ZM611 14 625 19 627 31ZM753 11 760 20 749 27ZM153 33 150 47 136 45ZM178 25 197 49 180 50ZM387 33 403 33 401 44ZM280 63 297 56 280 73ZM388 65 410 60 408 80ZM465 60 461 75 447 76ZM506 59 520 55 522 79ZM506 59 522 79 514 77ZM556 60 573 62 550 75ZM226 71 236 72 237 94ZM302 77 297 86 284 86ZM447 76 461 75 454 87ZM92 89 108 92 87 102ZM374 90 389 88 386 100ZM228 108 222 123 213 116ZM603 104 596 117 580 118ZM738 109 748 103 752 117ZM311 120 314 135 296 136ZM631 136 630 154 616 149ZM468 148 477 162 469 160ZM686 149 686 170 671 160ZM318 165 319 176 300 177ZM715 160 737 166 738 181ZM106 183 121 178 101 200ZM370 180 376 195 364 197ZM769 177 777 192 763 193ZM575 195 586 208 569 214ZM633 195 644 200 645 210ZM718 194 730 194 740 206ZM718 194 740 206 719 209ZM224 207 238 226 223 223ZM448 206 447 220 438 221ZM448 206 469 213 447 220ZM555 213 556 230 538 224ZM392 226 407 222 391 238ZM511 222 523 224 505 243ZM195 235 209 241 215 258ZM224 242 228 260 215 258ZM288 290 281 297 269 302ZM505 281 530 288 524 300ZM631 282 626 301 612 298ZM328 302 346 304 346 310ZM736 300 748 319 740 319ZM424 331 419 345 400 347ZM526 328 520 344 510 342ZM628 327 641 332 628 349ZM749 342 755 361 739 365ZM391 361 389 372 371 378ZM389 372 390 395 373 391ZM410 376 421 393 410 385ZM568 378 587 378 583 395ZM746 378 762 376 761 387ZM746 378 761 387 754 391ZM626 400 644 416 630 417ZM511 435 522 436 525 453ZM511 435 525 453 509 450ZM555 437 572 451 554 445ZM329 451 331 460 310 464ZM509 450 507 469 494 467ZM640 479 648 494 625 491ZM679 476 691 477 673 492ZM732 481 755 475 752 498ZM610 537 627 558 620 557ZM317 550 317 565 304 574ZM627 558 645 572 635 566ZM765 553 777 572 762 569ZM440 572 455 573 437 586ZM645 572 660 575 649 580ZM303 582 319 588 316 602ZM476 590 490 605 479 602ZM230 600 237 595 227 616ZM490 605 507 600 499 612ZM656 603 660 610 644 612ZM716 597 731 605 721 616ZM377 618 385 615 378 630ZM146 630 170 626 162 630Z"/><path fill="#d8eac3" stroke="#d8eac3" d="M344 19 364 33 341 32ZM611 14 627 31 612 28ZM282 27 301 34 303 49ZM282 27 303 49 281 47ZM301 34 319 30 311 47ZM301 34 311 47 303 49ZM378 30 387 33 395 48ZM378 30 395 48 374 45ZM387 33 401 44 395 48ZM523 31 536 25 528 50ZM124 44 122 61 102 55ZM197 49 194 60 180 64ZM466 44 477 60 465 60ZM265 56 280 73 271 70ZM433 58 445 59 432 80ZM520 55 538 57 522 79ZM573 62 569 73 550 75ZM180 74 185 87 163 93ZM380 80 385 75 389 88ZM380 80 389 88 374 90ZM550 75 569 73 556 85ZM674 74 675 91 662 93ZM222 86 237 94 240 102ZM374 90 386 100 372 110ZM435 91 437 110 424 109ZM479 89 483 100 462 110ZM479 89 500 94 483 100ZM556 85 569 94 575 102ZM662 93 664 100 642 104ZM462 110 483 100 481 118ZM483 100 497 104 494 125ZM724 102 732 121 716 117ZM738 109 752 117 732 121ZM181 118 193 119 197 132ZM181 118 197 132 179 132ZM510 117 528 122 522 134ZM510 117 522 134 513 132ZM716 117 720 132 700 136ZM716 117 732 121 738 138ZM420 130 439 134 421 154ZM357 153 371 150 358 168ZM451 149 468 148 455 162ZM641 147 662 145 642 166ZM303 165 300 177 283 182ZM455 162 469 160 467 180ZM455 162 467 180 448 177ZM642 166 645 183 627 180ZM671 160 686 184 673 178ZM283 182 289 194 269 198ZM432 185 448 177 449 195ZM432 185 449 195 436 192ZM614 184 615 196 600 197ZM633 195 645 210 630 206ZM325 213 349 213 334 226ZM569 214 580 221 565 226ZM690 211 701 220 692 222ZM603 226 612 243 601 243ZM619 224 635 237 612 243ZM209 241 224 242 215 258ZM325 245 347 243 331 254ZM559 243 557 253 543 260ZM484 250 481 272 463 267ZM451 270 463 267 466 284ZM451 270 466 284 447 284ZM558 268 558 289 545 286ZM644 266 645 284 631 282ZM733 272 749 273 735 281ZM393 289 408 289 393 300ZM545 286 558 289 542 298ZM673 287 679 304 664 298ZM328 302 346 310 328 320ZM378 303 373 317 359 318ZM612 298 626 301 626 319ZM768 313 777 316 767 327ZM581 331 599 330 600 344ZM658 329 658 348 641 346ZM500 346 506 355 494 365ZM573 359 583 362 568 378ZM389 372 410 385 390 395ZM423 371 438 370 421 393ZM497 374 514 376 500 392ZM483 394 500 392 495 406ZM722 391 740 388 736 402ZM722 391 736 402 715 405ZM754 391 755 404 736 402ZM433 401 439 417 419 423ZM526 403 543 402 521 417ZM588 410 590 415 572 424ZM626 400 645 407 644 416ZM663 404 680 402 655 425ZM304 418 319 438 297 431ZM476 425 490 424 480 436ZM490 424 497 433 480 436ZM490 424 506 422 497 433ZM590 415 597 423 604 435ZM644 416 660 436 642 438ZM467 434 480 436 484 449ZM748 450 760 455 769 470ZM461 461 483 470 476 480ZM461 461 476 480 461 480ZM494 467 507 469 495 479ZM527 461 535 467 522 476ZM555 484 554 491 545 498ZM660 478 679 476 673 492ZM660 478 673 492 661 495ZM648 494 648 508 631 513ZM737 494 752 498 740 515ZM718 509 740 515 737 530ZM718 509 737 530 717 521ZM747 508 753 524 737 530ZM632 529 628 544 610 537ZM703 522 709 543 690 545ZM717 521 737 530 720 543ZM362 540 373 537 357 557ZM610 537 628 544 627 558ZM765 553 777 554 777 572ZM752 575 762 569 761 580ZM588 582 597 582 597 605ZM672 580 670 601 656 603ZM705 587 716 581 706 602ZM716 581 716 597 706 602ZM716 581 735 582 716 597ZM574 597 584 614 565 611ZM706 602 716 597 708 619ZM565 611 584 614 586 630ZM565 611 586 630 571 630ZM584 614 597 628 586 630ZM708 619 700 630 688 630Z"/><path fill="#d5e7c0" stroke="#d5e7c0" d="M455 17 465 16 461 26ZM178 25 190 28 197 49ZM612 28 631 47 611 49ZM281 47 303 49 297 56ZM374 45 395 48 388 65ZM410 60 419 73 408 80ZM762 55 777 75 762 73ZM271 70 280 73 284 86ZM271 70 284 86 274 95ZM695 76 685 93 675 91ZM500 94 497 104 483 100ZM193 104 193 119 181 118ZM282 108 298 110 298 116ZM424 109 437 117 421 119ZM510 117 513 132 494 139ZM410 140 420 130 421 154ZM184 146 185 161 160 166ZM409 151 421 154 423 165ZM539 179 535 195 525 200ZM703 190 707 214 690 211ZM749 197 760 211 751 211ZM209 207 224 207 223 223ZM416 206 432 213 438 221ZM707 214 715 227 701 220ZM556 230 559 243 541 238ZM541 238 559 243 543 260ZM215 258 207 267 195 268ZM716 254 723 274 701 272ZM542 265 558 268 545 286ZM439 295 453 301 435 316ZM453 301 448 317 435 316ZM481 299 481 314 465 320ZM704 304 715 295 704 316ZM599 330 613 325 620 343ZM613 325 628 327 620 343ZM687 356 692 372 671 379ZM687 356 703 360 692 372ZM768 355 777 373 762 376ZM661 378 671 379 660 389ZM671 379 676 388 660 389ZM464 388 468 401 446 401ZM528 390 526 403 511 407ZM565 388 588 410 573 403ZM433 401 446 401 439 417ZM582 431 604 435 596 447ZM582 431 596 447 588 453ZM747 508 770 507 753 524ZM603 551 598 571 581 573ZM588 582 590 600 574 597ZM535 630 552 628 543 630ZM716 625 716 630 700 630ZM716 625 735 626 716 630ZM735 626 735 630 716 630Z"/><path fill="#d2e7bd" stroke="#d2e7bd" d="M455 17 461 26 452 27ZM603 27 612 28 603 42ZM612 28 627 31 631 47ZM374 45 388 65 371 59ZM401 44 417 65 410 60ZM568 41 584 49 587 64ZM568 41 587 64 573 62ZM237 94 255 87 240 102ZM346 94 363 89 356 104ZM702 94 722 88 700 100ZM167 109 177 100 168 123ZM424 109 437 110 437 117ZM752 117 760 118 750 132ZM410 140 421 154 409 151ZM124 155 115 165 102 169ZM300 148 310 147 303 165ZM310 147 318 165 303 165ZM656 169 663 182 645 183ZM656 169 671 160 673 178ZM230 180 227 195 209 198ZM227 195 224 207 209 207ZM432 213 448 206 438 221ZM512 214 528 214 511 222ZM740 206 751 211 731 230ZM224 242 237 250 228 260ZM460 238 479 241 469 259ZM543 260 557 253 542 265ZM451 270 447 284 440 290ZM288 290 299 284 281 297ZM440 290 453 301 439 295ZM646 313 658 329 641 332ZM740 319 748 319 749 332ZM318 348 313 357 303 363ZM755 361 768 355 762 376ZM755 361 762 376 746 378ZM331 377 348 371 347 388ZM365 377 371 378 373 391ZM365 377 373 391 358 390ZM389 372 410 376 410 385ZM483 404 495 406 476 425ZM736 402 755 404 731 423ZM572 424 590 415 582 431ZM572 424 582 431 570 435ZM644 416 655 425 660 436ZM731 423 731 432 723 431ZM768 435 760 455 748 450ZM739 446 737 461 722 464ZM748 450 753 461 737 461ZM310 464 331 460 311 482ZM626 478 640 479 625 491ZM752 575 761 580 747 584ZM506 588 522 584 507 600ZM588 582 597 605 590 600ZM479 602 479 620 470 612ZM590 600 597 605 584 614ZM687 600 689 620 677 611ZM470 612 461 627 452 630Z"/><path fill="#cce1b7" stroke="#cce1b7" d="M465 16 482 10 461 26ZM536 25 536 43 528 50ZM642 29 641 40 631 47ZM432 43 452 40 433 58ZM452 40 445 59 433 58ZM550 48 568 41 573 62ZM584 49 603 42 599 58ZM538 57 540 70 522 79ZM649 77 662 93 650 92ZM777 75 777 90 761 85ZM461 124 468 131 454 136ZM461 124 481 118 468 131ZM378 140 387 131 371 150ZM513 132 509 147 494 153ZM377 169 370 180 363 185ZM752 167 760 166 746 180ZM526 178 525 200 513 194ZM526 178 539 179 525 200ZM717 179 718 194 703 190ZM717 179 738 181 718 194ZM513 194 525 200 512 214ZM575 195 569 214 555 213ZM689 270 701 272 710 285ZM440 290 439 295 424 296ZM424 296 439 295 435 316ZM511 299 524 300 513 311ZM524 300 521 312 513 311ZM664 298 659 314 646 313ZM626 319 628 327 613 325ZM676 348 687 347 687 356ZM583 362 587 378 568 378ZM314 379 331 377 325 386ZM632 370 646 371 628 386ZM528 390 541 388 526 403ZM640 394 660 389 645 407ZM480 436 497 433 495 454ZM480 436 495 454 484 449ZM570 435 582 431 572 451ZM662 589 672 580 656 603ZM452 630 461 627 465 630ZM461 627 481 626 465 630ZM586 630 597 628 584 630Z"/><path fill="#d2e4bd" stroke="#d2e4bd" d="M482 10 484 33 461 26ZM371 59 388 65 380 80ZM410 60 417 65 419 73ZM346 94 356 104 347 110ZM664 100 674 108 657 123ZM572 139 571 152 556 155ZM703 190 719 209 707 214ZM599 330 620 343 600 344ZM365 377 358 390 347 388ZM310 404 318 423 304 418ZM645 407 655 425 644 416ZM777 529 777 535 762 537Z"/><path fill="#e4f6d5" stroke="#e4f6d5" d="M524 14 523 31 515 32ZM777 15 777 27 760 33ZM515 32 505 50 496 45ZM528 50 520 55 506 59ZM168 80 180 74 163 93ZM485 71 479 89 463 87ZM702 151 721 147 715 160ZM686 200 703 190 690 211ZM528 244 541 238 520 251ZM331 254 326 265 318 268ZM689 270 686 286 673 287ZM588 304 600 299 588 313ZM694 334 701 328 687 347ZM318 448 310 464 299 469ZM597 628 617 627 596 630Z"/><path fill="#c6deb4" stroke="#c6deb4" d="M625 19 646 11 627 31ZM434 35 452 40 432 43ZM612 313 613 325 599 330Z"/><path fill="#dbf0c9" stroke="#dbf0c9" d="M425 29 432 43 420 43ZM674 108 693 100 680 116ZM269 198 284 211 268 210ZM224 207 235 212 238 226ZM565 226 583 236 572 244ZM121 253 135 250 117 270ZM160 274 175 281 169 287ZM760 274 777 275 777 283ZM409 316 407 327 390 326ZM365 347 378 348 372 355ZM394 406 402 424 391 424ZM421 407 419 423 402 424ZM753 461 766 482 755 475ZM746 596 765 601 747 618Z"/><path fill="#c6deb1" stroke="#c6deb1" d="M434 35 452 27 452 40ZM388 65 385 75 380 80ZM686 286 704 304 695 297Z"/><path fill="#c3dbae" stroke="#c3dbae" d="M452 27 461 26 452 40ZM528 50 536 43 520 55ZM185 87 177 100 167 109ZM664 100 657 123 649 119ZM770 106 760 118 752 117ZM770 106 777 103 760 118ZM574 124 580 118 572 139ZM646 133 659 136 641 147ZM752 167 746 180 738 181ZM707 183 717 179 703 190ZM468 229 482 224 460 238ZM436 244 432 250 425 260ZM528 244 520 251 512 260ZM723 237 716 254 709 259ZM543 260 542 265 527 269ZM709 259 716 254 701 272ZM527 269 542 265 545 286ZM527 269 545 286 530 288ZM718 285 715 295 704 304ZM305 303 297 312 285 315ZM305 303 311 298 297 312ZM695 297 704 304 704 316ZM513 311 521 312 509 332ZM602 313 612 313 599 330ZM303 363 313 357 299 371ZM739 365 731 370 724 376ZM739 365 755 361 746 378ZM739 365 746 378 731 370ZM731 370 746 378 740 388ZM648 470 659 460 640 479ZM737 530 731 536 720 543ZM485 543 475 551 466 558ZM440 618 447 614 432 626ZM118 630 134 630 115 630ZM146 630 162 630 150 630ZM268 630 284 630 269 630ZM378 630 376 630 360 630ZM378 630 386 630 376 630ZM402 630 400 630 388 630ZM423 630 432 626 425 630ZM452 630 465 630 446 630ZM525 630 535 630 543 630ZM571 630 586 630 566 630ZM586 630 584 630 566 630ZM648 630 662 630 663 630ZM648 630 663 630 643 630ZM662 630 678 628 663 630ZM678 628 671 630 663 630ZM688 630 700 630 686 630ZM755 630 753 630 735 630ZM755 630 762 630 753 630Z"/><path fill="#cfe4bd" stroke="#cfe4bd" d="M461 26 484 33 466 44ZM620 56 610 78 598 79ZM675 91 674 108 664 100ZM703 190 718 194 719 209ZM376 205 385 215 392 226ZM676 358 687 356 671 379ZM630 417 633 432 615 435ZM554 445 568 462 550 469Z"/><path fill="#c9deb4" stroke="#c9deb4" d="M603 27 603 42 584 49ZM550 48 573 62 556 60ZM650 92 662 93 642 104ZM205 139 205 148 198 155ZM537 169 539 179 526 178ZM692 222 701 220 693 240ZM686 286 710 285 704 304ZM695 297 704 316 691 320ZM676 348 687 356 676 358ZM371 378 389 372 373 391ZM724 376 731 370 740 388ZM554 445 550 469 535 467ZM737 620 747 618 735 626Z"/><path fill="#d2e7c0" stroke="#d2e7c0" d="M226 50 244 41 223 63ZM522 79 540 70 520 92ZM274 95 282 108 273 102ZM282 108 298 116 289 125ZM583 108 603 104 580 118ZM574 124 572 139 551 132ZM468 148 469 160 455 162ZM585 169 582 178 574 175ZM656 169 673 178 663 182ZM749 197 763 193 760 211ZM320 214 334 226 310 222ZM707 214 719 209 715 227ZM440 290 447 284 453 301ZM710 285 718 285 704 304ZM691 320 704 316 694 334ZM526 328 539 326 520 344ZM649 356 646 371 632 370ZM768 355 777 362 777 373ZM304 418 318 423 319 438ZM484 449 495 454 494 467ZM753 461 755 475 732 481ZM766 482 761 497 752 498ZM512 526 512 542 500 544ZM479 602 499 612 479 620ZM470 612 479 620 481 626ZM735 626 755 630 735 630Z"/><path fill="#e4f6d2" stroke="#e4f6d2" d="M496 45 505 50 490 58ZM505 50 506 59 490 58ZM751 49 763 41 752 62ZM274 95 273 102 260 103ZM513 163 512 183 491 183ZM512 260 520 251 527 269ZM512 260 527 269 507 265ZM415 285 424 296 408 302ZM600 299 602 313 588 313ZM299 334 318 326 302 344ZM468 401 483 404 476 425ZM468 401 476 425 463 415ZM500 558 505 550 492 569Z"/><path fill="#c6dbb1" stroke="#c6dbb1" d="M550 48 556 60 538 57ZM649 119 657 123 659 136ZM303 165 318 165 300 177ZM738 181 746 180 730 194ZM701 272 723 274 710 285ZM0 630 15 630 0 630Z"/><path fill="#cce1ba" stroke="#cce1ba" d="M538 57 556 60 550 75ZM761 85 777 90 777 103ZM555 213 569 214 565 226ZM527 269 530 288 505 281ZM424 296 435 316 422 312ZM626 478 625 491 610 495Z"/><path fill="#cce4ba" stroke="#cce4ba" d="M649 77 664 73 662 93ZM761 85 777 103 770 106ZM228 108 237 115 222 123ZM737 328 749 332 731 343ZM671 379 692 372 687 385ZM700 630 716 625 700 630Z"/><path fill="#e7f6d5" stroke="#e7f6d5" d="M650 92 642 104 629 109ZM686 200 690 211 670 214ZM512 260 507 265 498 271ZM679 333 676 348 658 348ZM737 328 731 343 723 348ZM752 498 747 508 740 515ZM512 542 505 550 500 558ZM440 618 432 626 423 630Z"/><path fill="#def3cc" stroke="#def3cc" d="M207 328 229 346 208 340ZM117 393 119 402 107 402ZM135 436 152 440 145 447ZM251 511 269 515 265 526ZM416 569 440 572 437 586Z"/><path fill="#c9e1b4" stroke="#c9e1b4" d="M455 573 447 580 437 586Z"/></g>
<path d="M413,352 L420,365 L422,390 L430,401 L431,416 L436,426 L443,435 L448,439 L453,453 L466,465 L476,472 L473,482" fill="none" stroke="#a9d4ee" stroke-width="1.4"/>
<path d="M0,630 L0,370.6 C6.4,368.4 25.0,361.7 38.4,357.2 C51.8,352.7 66.7,347.3 80.4,343.5 C94.1,339.7 107.1,336.8 120.4,334.5 C133.7,332.2 148.4,330.8 160.4,329.8 C172.4,328.8 181.8,328.5 192.6,328.5 C203.4,328.5 215.8,329.0 225.4,329.5 C235.0,330.0 241.4,330.5 250.4,331.5 C259.4,332.5 271.2,334.0 279.2,335.7 C287.2,337.5 293.2,337.6 298.4,342.0 C303.6,346.4 307.9,354.0 310.4,362.0 C312.9,370.0 312.9,382.5 313.4,390.0 C313.9,397.5 313.4,404.1 313.4,406.9 L312.7,418.5 L316.0,430.2 L314.7,441.9 L323.7,452.2 L334.1,461.3 L345.8,466.5 L356.1,480.7 L365.2,489.8 L366.5,493.7 L378.2,494.4 L393.7,502.8 L396.3,510.6 L401.5,504.1 L417.1,497.6 L436.5,491.1 L459.8,488.5 L472.8,482.0 L494.9,484.6 L515.6,483.3 L527.3,475.6 L540.4,469.1 L560.4,463.3 L580.4,460.5 L591.4,461.0 L600.4,465.6 L618.2,463.3 L631.4,468.9 L658.2,460.0 L689.3,454.4 L715.4,455.0 L738.2,460.0 L760.4,464.4 L777.1,472.2 L777.1,630 Z" fill="#b3dcf2"/>
<path d="M0.0,370.6 C6.4,368.4 25.0,361.7 38.4,357.2 C51.8,352.7 66.7,347.3 80.4,343.5 C94.1,339.7 107.1,336.8 120.4,334.5 C133.7,332.2 148.4,330.8 160.4,329.8 C172.4,328.8 181.8,328.5 192.6,328.5 C203.4,328.5 215.8,329.0 225.4,329.5 C235.0,330.0 241.4,330.5 250.4,331.5 C259.4,332.5 271.2,334.0 279.2,335.7 C287.2,337.5 293.2,337.6 298.4,342.0 C303.6,346.4 307.9,354.0 310.4,362.0 C312.9,370.0 312.9,382.5 313.4,390.0 C313.9,397.5 313.4,404.1 313.4,406.9 L312.7,418.5 L316.0,430.2 L314.7,441.9 L323.7,452.2 L334.1,461.3 L345.8,466.5 L356.1,480.7 L365.2,489.8 L366.5,493.7 L378.2,494.4 L393.7,502.8 L396.3,510.6 L401.5,504.1 L417.1,497.6 L436.5,491.1 L459.8,488.5 L472.8,482.0 L494.9,484.6 L515.6,483.3 L527.3,475.6 L540.4,469.1 L560.4,463.3 L580.4,460.5 L591.4,461.0 L600.4,465.6 L618.2,463.3 L631.4,468.9 L658.2,460.0 L689.3,454.4 L715.4,455.0 L738.2,460.0 L760.4,464.4 L777.1,472.2" fill="none" stroke="#e8f6dd" stroke-width="1.6" opacity="0.8"/>
</svg>
<div style="position:absolute;left:1391.4px;top:763.6px;width:92.8px;height:92.8px;box-sizing:border-box;border-radius:50%;border:5px solid #6cb1ec;background:rgba(248,250,250,0.92)"></div>
<div style="position:absolute;left:1412.3px;top:784.5px;width:51px;height:51px;border-radius:50%;background:#2196f3"></div>
<div class="t" style="left:937.8px;width:1000px;text-align:center;top:802.6px;font-size:16.2px;color:#fff;font-weight:400;-webkit-text-stroke:0;letter-spacing:0px">588</div>
</body></html>
